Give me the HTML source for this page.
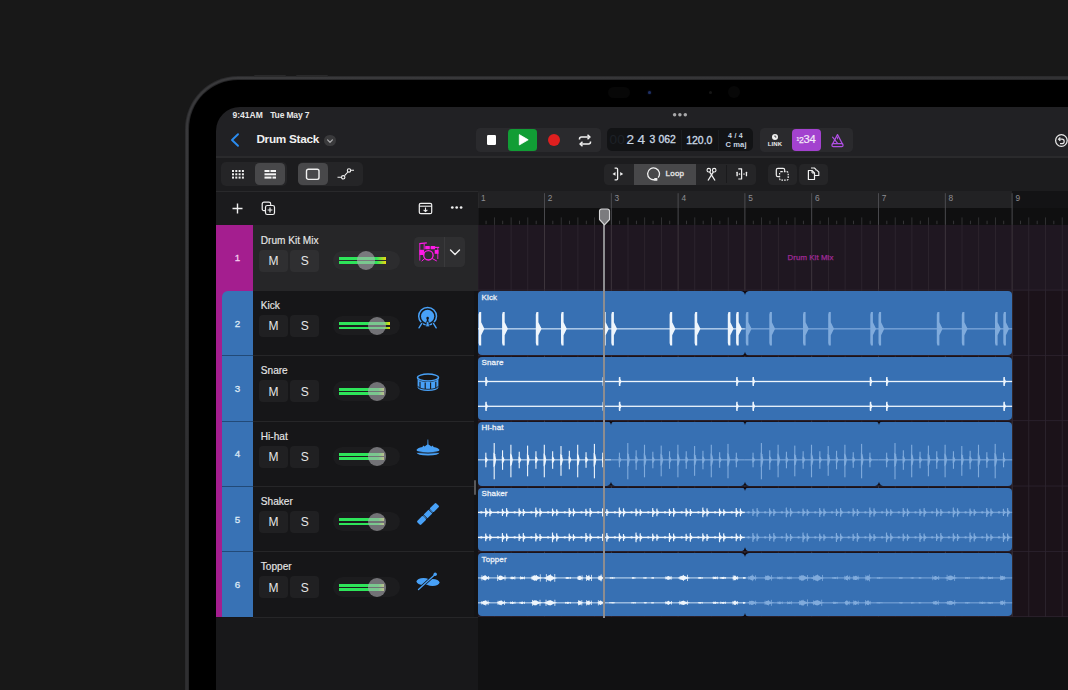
<!DOCTYPE html>
<html><head><meta charset="utf-8"><style>
html,body{margin:0;padding:0;width:1068px;height:690px;overflow:hidden;background:#181818;}
body{position:relative;font-family:"Liberation Sans", sans-serif;}
body>div{position:absolute;}
.t{position:absolute;line-height:1;white-space:nowrap;}
</style></head><body>
<div style="left:185.3px;top:75.8px;width:1100px;height:900px;border-radius:53px;background:#2b2b2d;"></div><div style="left:186.2px;top:76.6px;width:1100px;height:900px;border-radius:52px;background:linear-gradient(160deg,#3a3a3c,#2f2f31 30%);"></div><div style="left:188.3px;top:78.9px;width:1100px;height:900px;border-radius:50px;background:#272729;"></div><div style="left:189.2px;top:80.3px;width:1100px;height:900px;border-radius:49px;background:#000;"></div><div style="left:254px;top:74.5px;width:32px;height:2.5px;background:#29292a;border-radius:1px;"></div><div style="left:296px;top:74.5px;width:32px;height:2.5px;background:#29292a;border-radius:1px;"></div><div style="left:648.2px;top:91px;width:3px;height:3.2px;border-radius:2px;background:#1f3166;box-shadow:0 0 2px #1a2450"></div><div style="left:608px;top:87px;width:22px;height:11px;border-radius:6px;background:#070707;"></div><div style="left:709.2px;top:91.2px;width:2.6px;height:2.6px;border-radius:2px;background:#161616;"></div><div style="left:728px;top:86px;width:12px;height:12px;border-radius:6px;background:#070707;"></div><div style="left:215.5px;top:106.5px;width:1000px;height:700px;border-top-left-radius:24px;background:#212124;overflow:hidden" id="scr"></div><div style="left:215.5px;top:156px;width:900px;height:1.6px;background:#2a2a2c;border-radius:0px;"></div><div style="left:215.5px;top:157.6px;width:900px;height:33.4px;background:#1c1c1e;border-radius:0px;"></div><svg style="position:absolute;left:671px;top:111px;" width="18" height="7" viewBox="0 0 18 7"><circle cx="3.6" cy="3.7" r="1.75" fill="#a8a8aa"/><circle cx="8.9" cy="3.7" r="1.75" fill="#a8a8aa"/><circle cx="14.3" cy="3.7" r="1.75" fill="#a8a8aa"/></svg><div class="t" style="left:232.5px;top:111.00px;font-size:8.5px;color:#e8e8e8;font-weight:700;letter-spacing:0px">9:41AM</div><div class="t" style="left:270.2px;top:111.00px;font-size:8.5px;color:#e8e8e8;font-weight:700;letter-spacing:-0.15px">Tue May 7</div><svg style="position:absolute;left:229px;top:132px;" width="12" height="16" viewBox="0 0 12 16"><path d="M9 2.2 L3 8 L9 13.8" fill="none" stroke="#2b8cf0" stroke-width="1.9" stroke-linecap="round" stroke-linejoin="round"/></svg><div class="t" style="left:256.4px;top:134.11px;font-size:11.8px;color:#f0f0f0;font-weight:700;letter-spacing:-0.3px">Drum Stack</div><div style="left:324.2px;top:134.5px;width:11.6px;height:11.6px;border-radius:6px;background:#3a3a3c"></div><svg style="position:absolute;left:324.2px;top:134.5px;" width="12" height="12" viewBox="0 0 12 12"><path d="M3.6 4.9 L6 7.3 L8.4 4.9" fill="none" stroke="#b0b0b2" stroke-width="1.2" stroke-linecap="round" stroke-linejoin="round"/></svg><div style="left:475.5px;top:128px;width:125.5px;height:24px;background:#2a2a2d;border-radius:4.5px;"></div><div style="left:486.8px;top:135px;width:9.6px;height:10px;background:#ffffff;border-radius:1.2px;"></div><div style="left:507.7px;top:129.2px;width:29.8px;height:21.6px;background:#119d35;border-radius:3.5px;"></div><svg style="position:absolute;left:507.7px;top:129.2px;" width="30" height="22" viewBox="0 0 30 22"><path d="M11.3 5.6 L20.2 10.8 L11.3 16 Z" fill="#fff" stroke="#fff" stroke-width="0.8" stroke-linejoin="round"/></svg><div style="left:548px;top:134px;width:12px;height:12px;border-radius:6px;background:#df1f1f"></div><svg style="position:absolute;left:577px;top:134px;" width="16" height="13" viewBox="0 0 16 13"><path d="M2.5 5.5 V5 Q2.5 3 4.5 3 H12" fill="none" stroke="#f2f2f2" stroke-width="1.5"/><path d="M10.5 0.8 L13 3 L10.5 5.2" fill="none" stroke="#f2f2f2" stroke-width="1.5" stroke-linejoin="round"/><path d="M13.5 7.5 V8 Q13.5 10 11.5 10 H4" fill="none" stroke="#f2f2f2" stroke-width="1.5"/><path d="M5.5 7.8 L3 10 L5.5 12.2" fill="none" stroke="#f2f2f2" stroke-width="1.5" stroke-linejoin="round"/></svg><div style="left:606.7px;top:128.2px;width:146.1px;height:23.3px;background:#121315;border-radius:5px;"></div><div style="left:681px;top:130px;width:0.8px;height:20px;background:#1a1c1f;border-radius:0px;"></div><div style="left:717.8px;top:130px;width:0.8px;height:20px;background:#1a1c1f;border-radius:0px;"></div><div class="t" style="left:609.6px;top:133.29px;font-size:13.6px;color:#1d2127;font-weight:400;letter-spacing:0px">00</div><div class="t" style="left:626.6px;top:133.29px;font-size:13.6px;color:#c8d6e2;font-weight:400;-webkit-text-stroke:0.2px #c8d6e2">2</div><div class="t" style="left:637.6px;top:133.29px;font-size:13.6px;color:#c8d6e2;font-weight:400;-webkit-text-stroke:0.2px #c8d6e2">4</div><div class="t" style="left:649.5px;top:135.40px;font-size:10.4px;color:#c8d6e2;font-weight:400;-webkit-text-stroke:0.35px #c8d6e2">3</div><div class="t" style="left:658.6px;top:135.40px;font-size:10.4px;color:#c8d6e2;font-weight:400;letter-spacing:-0.1px;-webkit-text-stroke:0.35px #c8d6e2">062</div><div class="t" style="left:686.2px;top:135.01px;font-size:10.5px;color:#c8d6e2;font-weight:400;letter-spacing:0px;-webkit-text-stroke:0.35px #c8d6e2">120.0</div><div class="t" style="left:635.5px;width:200px;text-align:center;top:131.97px;font-size:7px;color:#c8d6e2;font-weight:700;letter-spacing:0.3px">4 / 4</div><div class="t" style="left:636px;width:200px;text-align:center;top:140.77px;font-size:7.6px;color:#c8d6e2;font-weight:700;letter-spacing:0.1px">C maj</div><div style="left:759.6px;top:128px;width:93.4px;height:24px;background:#2a2a2d;border-radius:4.5px;"></div><div style="left:772px;top:133.5px;width:6px;height:6px;border-radius:3px;background:#f0f0f0"></div><svg style="position:absolute;left:772px;top:133.5px;" width="6" height="6" viewBox="0 0 6 6"><path d="M3 1.4 V3 H4.4" fill="none" stroke="#2a2a2d" stroke-width="0.9"/></svg><div class="t" style="left:675px;width:200px;text-align:center;top:140.92px;font-size:6px;color:#eaeaea;font-weight:700;letter-spacing:0.1px">LINK</div><div style="left:791.8px;top:129px;width:29.2px;height:22px;background:#a342cf;border-radius:4px;"></div><div class="t" style="left:796.3px;top:137.16px;font-size:5.6px;color:#f4eaf8;font-weight:700;">1</div><div class="t" style="left:799.0px;top:136.02px;font-size:8.6px;color:#f4eaf8;font-weight:400;-webkit-text-stroke:0.25px #f4eaf8">2</div><div class="t" style="left:803.4px;top:134.32px;font-size:11.2px;color:#f4eaf8;font-weight:400;-webkit-text-stroke:0.2px #f4eaf8">3</div><div class="t" style="left:809.6px;top:134.32px;font-size:11.2px;color:#f4eaf8;font-weight:400;-webkit-text-stroke:0.2px #f4eaf8">4</div><svg style="position:absolute;left:830px;top:132.5px;" width="15" height="15" viewBox="0 0 15 15"><path d="M2.4 11.2 L7.5 1.6 L12.6 11.2" fill="none" stroke="#b04fe4" stroke-width="1.25" stroke-linejoin="round"/><rect x="2" y="10.6" width="11" height="3" rx="1.2" fill="none" stroke="#b04fe4" stroke-width="1.25"/><path d="M7.6 10.3 L2.6 4.2" stroke="#b04fe4" stroke-width="1.2" stroke-linecap="round"/><path d="M7.5 3.9 V6.3" stroke="#b04fe4" stroke-width="0.9"/></svg><svg style="position:absolute;left:1053.5px;top:132.5px;" width="15" height="15" viewBox="0 0 15 15"><circle cx="7.4" cy="7.5" r="5.8" fill="none" stroke="#e8e8e8" stroke-width="1.25"/><path d="M5 6.2 H8 A2.2 2.2 0 1 1 8 10.6 H6" fill="none" stroke="#e8e8e8" stroke-width="1.2"/><path d="M6.3 4.5 L4.6 6.2 L6.3 7.9" fill="none" stroke="#e8e8e8" stroke-width="1.2"/></svg><div style="left:221px;top:162px;width:65.5px;height:24px;background:#252527;border-radius:5px;"></div><div style="left:255px;top:163px;width:30px;height:22px;background:#48484a;border-radius:4.5px;"></div><svg style="position:absolute;left:230.5px;top:168.5px;" width="14" height="11" viewBox="0 0 14 11"><rect x="1.0" y="1.0" width="2" height="2" fill="#f0f0f0"/><rect x="1.0" y="4.3" width="2" height="2" fill="#f0f0f0"/><rect x="1.0" y="7.6" width="2" height="2" fill="#f0f0f0"/><rect x="4.3" y="1.0" width="2" height="2" fill="#f0f0f0"/><rect x="4.3" y="4.3" width="2" height="2" fill="#f0f0f0"/><rect x="4.3" y="7.6" width="2" height="2" fill="#f0f0f0"/><rect x="7.6" y="1.0" width="2" height="2" fill="#f0f0f0"/><rect x="7.6" y="4.3" width="2" height="2" fill="#f0f0f0"/><rect x="7.6" y="7.6" width="2" height="2" fill="#f0f0f0"/><rect x="10.899999999999999" y="1.0" width="2" height="2" fill="#f0f0f0"/><rect x="10.899999999999999" y="4.3" width="2" height="2" fill="#f0f0f0"/><rect x="10.899999999999999" y="7.6" width="2" height="2" fill="#f0f0f0"/></svg><svg style="position:absolute;left:263.5px;top:168.5px;" width="14" height="12" viewBox="0 0 14 12"><rect x="0.5" y="1" width="5" height="2" fill="#f4f4f4"/><rect x="6.5" y="1" width="5.5" height="2" fill="#f4f4f4"/><rect x="0.5" y="4.3" width="11.5" height="2" fill="#f4f4f4"/><rect x="0.5" y="7.6" width="7" height="2" fill="#f4f4f4"/><rect x="8.5" y="7.6" width="3.5" height="2" fill="#f4f4f4"/></svg><div style="left:298px;top:162px;width:64.5px;height:24px;background:#252527;border-radius:5px;"></div><div style="left:298px;top:163px;width:30px;height:22px;background:#48484a;border-radius:4.5px;"></div><svg style="position:absolute;left:305px;top:168px;" width="16" height="13" viewBox="0 0 16 13"><rect x="1.5" y="1.2" width="12.5" height="10.2" rx="1.8" fill="none" stroke="#f0f0f0" stroke-width="1.4"/></svg><svg style="position:absolute;left:337px;top:166px;" width="18" height="15" viewBox="0 0 18 15"><path d="M0.5 11.3 H4.3 M7.6 9.7 L10.9 6 M13.7 4.3 H17" fill="none" stroke="#f0f0f0" stroke-width="1.1"/><circle cx="6.2" cy="11.3" r="1.7" fill="none" stroke="#f0f0f0" stroke-width="1.1"/><circle cx="12" cy="4.4" r="1.7" fill="none" stroke="#f0f0f0" stroke-width="1.1"/></svg><div style="left:603.5px;top:163.5px;width:152.8px;height:21.2px;background:#252527;border-radius:4.5px;"></div><div style="left:633.7px;top:163.5px;width:62px;height:21.2px;background:#48484a;border-radius:0px;"></div><div style="left:726.2px;top:165px;width:0.8px;height:18px;background:#1a1a1c;border-radius:0px;"></div><svg style="position:absolute;left:611px;top:166px;" width="14" height="16" viewBox="0 0 14 16"><path d="M3.6 2.2 H5.6 Q6.6 2.2 6.6 3.2 V12.8 Q6.6 13.8 5.6 13.8 H3.6" fill="none" stroke="#f0f0f0" stroke-width="1.3"/><path d="M1.5 7.9 L4.5 6 V9.8 Z" fill="#f0f0f0"/><path d="M9.2 6 L12.2 7.9 L9.2 9.8 Z" fill="#f0f0f0"/></svg><svg style="position:absolute;left:645.5px;top:166.5px;" width="15" height="15" viewBox="0 0 15 15"><path d="M8.8 12.6 A5.9 5.9 0 1 1 12.1 10.6" fill="none" stroke="#f0f0f0" stroke-width="1.3"/><rect x="8.2" y="11" width="3.2" height="2.8" rx="0.6" fill="#f0f0f0"/></svg><div class="t" style="left:665.6px;top:170.33px;font-size:8px;color:#e2e2e2;font-weight:400;letter-spacing:0.2px;-webkit-text-stroke:0.35px #e2e2e2">Loop</div><svg style="position:absolute;left:705px;top:166.5px;" width="13" height="15" viewBox="0 0 13 15"><circle cx="3.8" cy="3.2" r="1.8" fill="none" stroke="#f0f0f0" stroke-width="1.1"/><circle cx="9.2" cy="3.2" r="1.8" fill="none" stroke="#f0f0f0" stroke-width="1.1"/><path d="M4.6 4.8 L10 13.5 M8.4 4.8 L3 13.5" stroke="#f0f0f0" stroke-width="1.3"/></svg><svg style="position:absolute;left:734px;top:166px;" width="15" height="15" viewBox="0 0 15 15"><rect x="2.4" y="5.8" width="1.4" height="4.4" rx="0.5" fill="#f0f0f0"/><circle cx="5.5" cy="8" r="0.85" fill="#f0f0f0"/><path d="M4.3 2.8 H7.6 V13 H4.3" fill="none" stroke="#f0f0f0" stroke-width="1.2" stroke-linejoin="round"/><rect x="9" y="7.6" width="2" height="0.9" fill="#d8d8d8"/><rect x="11.8" y="5.8" width="1.3" height="4.4" rx="0.5" fill="#f0f0f0"/></svg><div style="left:767.6px;top:163.5px;width:29px;height:21.2px;background:#252527;border-radius:4.5px;"></div><div style="left:799px;top:163.5px;width:28.6px;height:21.2px;background:#252527;border-radius:4.5px;"></div><svg style="position:absolute;left:774.5px;top:167px;" width="16" height="15" viewBox="0 0 16 15"><rect x="1.3" y="1.3" width="8.4" height="8.4" rx="1.6" fill="none" stroke="#f0f0f0" stroke-width="1.2"/><rect x="4.6" y="4.6" width="8.6" height="8.6" rx="1.6" fill="#252527" stroke="#f0f0f0" stroke-width="1.2" stroke-dasharray="1.6 1.1"/></svg><svg style="position:absolute;left:806px;top:166px;" width="16" height="16" viewBox="0 0 16 16"><path d="M5 2 H8.5 L10 3.5 V4.5" fill="none" stroke="#f0f0f0" stroke-width="1.1"/><path d="M2.4 4.5 H6 L8.5 7 V13.5 H2.4 Z" fill="none" stroke="#f0f0f0" stroke-width="1.2" stroke-linejoin="round"/><path d="M6 4.5 V7 H8.5" fill="none" stroke="#f0f0f0" stroke-width="1"/><path d="M8.5 9.5 H12.8 V6 L10.5 3.8" fill="none" stroke="#f0f0f0" stroke-width="1.1"/></svg><div style="left:215.5px;top:191.3px;width:262.5px;height:34px;background:#1b1b1d;border-radius:0px;"></div><div style="left:215.5px;top:225px;width:262.5px;height:500px;background:#161618;border-radius:0px;"></div><div style="left:215.5px;top:190.6px;width:900px;height:0.9px;background:#29292b;border-radius:0px;"></div><svg style="position:absolute;left:230.5px;top:201.5px;" width="13" height="13" viewBox="0 0 13 13"><path d="M6.5 1.5 V11.5 M1.5 6.5 H11.5" stroke="#f0f0f0" stroke-width="1.4"/></svg><svg style="position:absolute;left:260.5px;top:200.5px;" width="15" height="15" viewBox="0 0 15 15"><rect x="1.2" y="1.2" width="8.5" height="8.5" rx="1.8" fill="none" stroke="#f0f0f0" stroke-width="1.2"/><rect x="4.5" y="4.5" width="9" height="9" rx="1.8" fill="#1b1b1d" stroke="#f0f0f0" stroke-width="1.2"/><path d="M9 6.6 V11.4 M6.6 9 H11.4" stroke="#f0f0f0" stroke-width="1.2"/></svg><svg style="position:absolute;left:418px;top:201.5px;" width="15" height="13" viewBox="0 0 15 13"><rect x="1.3" y="1.3" width="12.4" height="10.4" rx="1.5" fill="none" stroke="#f0f0f0" stroke-width="1.2"/><path d="M1.3 4.2 H13.7" stroke="#f0f0f0" stroke-width="1.1"/><path d="M7.5 5.5 V9.5 M5.6 7.8 L7.5 9.6 L9.4 7.8" fill="none" stroke="#f0f0f0" stroke-width="1.1"/></svg><svg style="position:absolute;left:449px;top:205px;" width="16" height="5" viewBox="0 0 16 5"><circle cx="3.3" cy="2.5" r="1.35" fill="#f0f0f0"/><circle cx="7.7" cy="2.5" r="1.35" fill="#f0f0f0"/><circle cx="12.1" cy="2.5" r="1.35" fill="#f0f0f0"/></svg><div style="left:253px;top:225.2px;width:225px;height:65.32999999999998px;background:#262628;border-radius:0px;"></div><div style="left:215.5px;top:225.2px;width:37.5px;height:391.9800000000001px;background:#a41e8f;border-radius:0px;"></div><div style="left:221.7px;top:290.53px;width:31.30000000000001px;height:326.6500000000001px;background:#3872b5;border-top-left-radius:6px"></div><div style="left:221.7px;top:355.36px;width:31.30000000000001px;height:1px;background:#224a78;border-radius:0px;"></div><div style="left:221.7px;top:420.69px;width:31.30000000000001px;height:1px;background:#224a78;border-radius:0px;"></div><div style="left:221.7px;top:486.02px;width:31.30000000000001px;height:1px;background:#224a78;border-radius:0px;"></div><div style="left:221.7px;top:551.3499999999999px;width:31.30000000000001px;height:1px;background:#224a78;border-radius:0px;"></div><div style="left:253px;top:290.03px;width:225px;height:1px;background:#262628;border-radius:0px;"></div><div style="left:253px;top:355.36px;width:225px;height:1px;background:#262628;border-radius:0px;"></div><div style="left:253px;top:420.69px;width:225px;height:1px;background:#262628;border-radius:0px;"></div><div style="left:253px;top:486.02px;width:225px;height:1px;background:#262628;border-radius:0px;"></div><div style="left:253px;top:551.3499999999999px;width:225px;height:1px;background:#262628;border-radius:0px;"></div><div style="left:253px;top:616.6800000000001px;width:225px;height:1px;background:#262628;border-radius:0px;"></div><div class="t" style="left:137.4px;width:200px;text-align:center;top:253.20px;font-size:9.8px;color:#f4d0ee;font-weight:400;-webkit-text-stroke:0.3px #f4d0ee">1</div><div class="t" style="left:260.8px;top:235.55px;font-size:10.1px;color:#e6e6e6;font-weight:400;letter-spacing:0px;-webkit-text-stroke:0.15px #e6e6e6">Drum Kit Mix</div><div style="left:259px;top:249.79999999999998px;width:29px;height:21.8px;background:#2f2f31;border-radius:4px;"></div><div style="left:290.3px;top:249.79999999999998px;width:29px;height:21.8px;background:#2f2f31;border-radius:4px;"></div><div class="t" style="left:173.5px;width:200px;text-align:center;top:255.04px;font-size:12px;color:#e6e6e6;font-weight:400;">M</div><div class="t" style="left:204.8px;width:200px;text-align:center;top:255.04px;font-size:12px;color:#e6e6e6;font-weight:400;">S</div><div style="left:332.8px;top:250.79999999999998px;width:67.4px;height:19.2px;background:#2c2c2e;border-radius:10px;"></div><div style="left:338.8px;top:257.10px;width:47.70px;height:2.75px;background:linear-gradient(90deg,#2ee55a 0,#2ee55a 37.7px,#ffd60a 47.7px)"></div><div style="left:338.8px;top:261.30px;width:47.70px;height:2.75px;background:linear-gradient(90deg,#2ee55a 0,#2ee55a 37.7px,#ffd60a 47.7px)"></div><div style="left:356.6px;top:251.20px;width:18.8px;height:18.8px;border-radius:9.4px;background:rgba(178,178,182,0.58)"></div><div class="t" style="left:137.4px;width:200px;text-align:center;top:318.53px;font-size:9.8px;color:#dde9f5;font-weight:400;-webkit-text-stroke:0.3px #dde9f5">2</div><div class="t" style="left:260.8px;top:300.88px;font-size:10.1px;color:#e6e6e6;font-weight:400;letter-spacing:0px;-webkit-text-stroke:0.15px #e6e6e6">Kick</div><div style="left:259px;top:315.13px;width:29px;height:21.8px;background:#202022;border-radius:4px;"></div><div style="left:290.3px;top:315.13px;width:29px;height:21.8px;background:#202022;border-radius:4px;"></div><div class="t" style="left:173.5px;width:200px;text-align:center;top:320.37px;font-size:12px;color:#e6e6e6;font-weight:400;">M</div><div class="t" style="left:204.8px;width:200px;text-align:center;top:320.37px;font-size:12px;color:#e6e6e6;font-weight:400;">S</div><div style="left:332.8px;top:316.13px;width:67.4px;height:19.2px;background:#1c1c1e;border-radius:10px;"></div><div style="left:338.8px;top:322.43px;width:51.70px;height:2.75px;background:linear-gradient(90deg,#2ee55a 0,#2ee55a 43.7px,#ffd60a 51.7px)"></div><div style="left:338.8px;top:326.63px;width:51.70px;height:2.75px;background:linear-gradient(90deg,#2ee55a 0,#2ee55a 43.7px,#ffd60a 51.7px)"></div><div style="left:367.6px;top:316.53px;width:18.8px;height:18.8px;border-radius:9.4px;background:rgba(178,178,182,0.58)"></div><div class="t" style="left:137.4px;width:200px;text-align:center;top:383.86px;font-size:9.8px;color:#dde9f5;font-weight:400;-webkit-text-stroke:0.3px #dde9f5">3</div><div class="t" style="left:260.8px;top:366.21px;font-size:10.1px;color:#e6e6e6;font-weight:400;letter-spacing:0px;-webkit-text-stroke:0.15px #e6e6e6">Snare</div><div style="left:259px;top:380.46000000000004px;width:29px;height:21.8px;background:#202022;border-radius:4px;"></div><div style="left:290.3px;top:380.46000000000004px;width:29px;height:21.8px;background:#202022;border-radius:4px;"></div><div class="t" style="left:173.5px;width:200px;text-align:center;top:385.70px;font-size:12px;color:#e6e6e6;font-weight:400;">M</div><div class="t" style="left:204.8px;width:200px;text-align:center;top:385.70px;font-size:12px;color:#e6e6e6;font-weight:400;">S</div><div style="left:332.8px;top:381.46000000000004px;width:67.4px;height:19.2px;background:#1c1c1e;border-radius:10px;"></div><div style="left:338.8px;top:387.76px;width:44.90px;height:2.75px;background:linear-gradient(90deg,#2ee55a 0,#2ee55a 39.2px,#c9d65a 44.9px)"></div><div style="left:338.8px;top:391.96px;width:44.90px;height:2.75px;background:linear-gradient(90deg,#2ee55a 0,#2ee55a 39.2px,#c9d65a 44.9px)"></div><div style="left:367.6px;top:381.86px;width:18.8px;height:18.8px;border-radius:9.4px;background:rgba(178,178,182,0.58)"></div><div class="t" style="left:137.4px;width:200px;text-align:center;top:449.19px;font-size:9.8px;color:#dde9f5;font-weight:400;-webkit-text-stroke:0.3px #dde9f5">4</div><div class="t" style="left:260.8px;top:431.54px;font-size:10.1px;color:#e6e6e6;font-weight:400;letter-spacing:0px;-webkit-text-stroke:0.15px #e6e6e6">Hi-hat</div><div style="left:259px;top:445.79px;width:29px;height:21.8px;background:#202022;border-radius:4px;"></div><div style="left:290.3px;top:445.79px;width:29px;height:21.8px;background:#202022;border-radius:4px;"></div><div class="t" style="left:173.5px;width:200px;text-align:center;top:451.03px;font-size:12px;color:#e6e6e6;font-weight:400;">M</div><div class="t" style="left:204.8px;width:200px;text-align:center;top:451.03px;font-size:12px;color:#e6e6e6;font-weight:400;">S</div><div style="left:332.8px;top:446.79px;width:67.4px;height:19.2px;background:#1c1c1e;border-radius:10px;"></div><div style="left:338.8px;top:453.09px;width:44.90px;height:2.75px;background:linear-gradient(90deg,#2ee55a 0,#2ee55a 39.2px,#c9d65a 44.9px)"></div><div style="left:338.8px;top:457.29px;width:44.90px;height:2.75px;background:linear-gradient(90deg,#2ee55a 0,#2ee55a 39.2px,#c9d65a 44.9px)"></div><div style="left:367.6px;top:447.19px;width:18.8px;height:18.8px;border-radius:9.4px;background:rgba(178,178,182,0.58)"></div><div class="t" style="left:137.4px;width:200px;text-align:center;top:514.52px;font-size:9.8px;color:#dde9f5;font-weight:400;-webkit-text-stroke:0.3px #dde9f5">5</div><div class="t" style="left:260.8px;top:496.87px;font-size:10.1px;color:#e6e6e6;font-weight:400;letter-spacing:0px;-webkit-text-stroke:0.15px #e6e6e6">Shaker</div><div style="left:259px;top:511.12px;width:29px;height:21.8px;background:#202022;border-radius:4px;"></div><div style="left:290.3px;top:511.12px;width:29px;height:21.8px;background:#202022;border-radius:4px;"></div><div class="t" style="left:173.5px;width:200px;text-align:center;top:516.36px;font-size:12px;color:#e6e6e6;font-weight:400;">M</div><div class="t" style="left:204.8px;width:200px;text-align:center;top:516.36px;font-size:12px;color:#e6e6e6;font-weight:400;">S</div><div style="left:332.8px;top:512.12px;width:67.4px;height:19.2px;background:#1c1c1e;border-radius:10px;"></div><div style="left:338.8px;top:518.42px;width:44.90px;height:2.75px;background:linear-gradient(90deg,#2ee55a 0,#2ee55a 39.2px,#c9d65a 44.9px)"></div><div style="left:338.8px;top:522.62px;width:44.90px;height:2.75px;background:linear-gradient(90deg,#2ee55a 0,#2ee55a 39.2px,#c9d65a 44.9px)"></div><div style="left:367.6px;top:512.52px;width:18.8px;height:18.8px;border-radius:9.4px;background:rgba(178,178,182,0.58)"></div><div class="t" style="left:137.4px;width:200px;text-align:center;top:579.85px;font-size:9.8px;color:#dde9f5;font-weight:400;-webkit-text-stroke:0.3px #dde9f5">6</div><div class="t" style="left:260.8px;top:562.20px;font-size:10.1px;color:#e6e6e6;font-weight:400;letter-spacing:0px;-webkit-text-stroke:0.15px #e6e6e6">Topper</div><div style="left:259px;top:576.4499999999999px;width:29px;height:21.8px;background:#202022;border-radius:4px;"></div><div style="left:290.3px;top:576.4499999999999px;width:29px;height:21.8px;background:#202022;border-radius:4px;"></div><div class="t" style="left:173.5px;width:200px;text-align:center;top:581.69px;font-size:12px;color:#e6e6e6;font-weight:400;">M</div><div class="t" style="left:204.8px;width:200px;text-align:center;top:581.69px;font-size:12px;color:#e6e6e6;font-weight:400;">S</div><div style="left:332.8px;top:577.4499999999999px;width:67.4px;height:19.2px;background:#1c1c1e;border-radius:10px;"></div><div style="left:338.8px;top:583.75px;width:44.90px;height:2.75px;background:linear-gradient(90deg,#2ee55a 0,#2ee55a 39.2px,#c9d65a 44.9px)"></div><div style="left:338.8px;top:587.95px;width:44.90px;height:2.75px;background:linear-gradient(90deg,#2ee55a 0,#2ee55a 39.2px,#c9d65a 44.9px)"></div><div style="left:367.6px;top:577.85px;width:18.8px;height:18.8px;border-radius:9.4px;background:rgba(178,178,182,0.58)"></div><div style="left:414.2px;top:237.2px;width:51.1px;height:29.8px;background:#2f2f31;border-radius:4.5px;"></div><div style="left:443.6px;top:237.2px;width:0.9px;height:29.8px;background:#3a3a3c;border-radius:0px;"></div><svg style="position:absolute;left:448px;top:247px;" width="14" height="11" viewBox="0 0 14 11"><path d="M2.5 3 L7 7.5 L11.5 3" fill="none" stroke="#f0f0f0" stroke-width="1.4" stroke-linecap="round" stroke-linejoin="round"/></svg><svg style="position:absolute;left:419px;top:242px;" width="21" height="20" viewBox="0 0 21 20"><path d="M0.3 1.6 L7.8 0.9" stroke="#ff1ae6" stroke-width="1.4"/><path d="M5.2 1.5 V7.5" stroke="#ff1ae6" stroke-width="0.9"/>
<rect x="6.2" y="3.9" width="4.6" height="3.3" rx="0.5" fill="#ff1ae6"/><rect x="11.6" y="3.9" width="4.5" height="3.3" rx="0.5" fill="#ff1ae6"/>
<path d="M15.6 5.4 H20.2" stroke="#ff1ae6" stroke-width="1.2"/><path d="M0.8 1.8 V18.6" stroke="#ff1ae6" stroke-width="0.9"/>
<rect x="0.5" y="7.8" width="4.6" height="5.2" fill="#ff1ae6"/><rect x="15.7" y="7.9" width="3.8" height="3.9" fill="#ff1ae6"/><path d="M18.8 6 V17" stroke="#ff1ae6" stroke-width="0.9"/>
<circle cx="9.4" cy="13.3" r="4.7" fill="none" stroke="#ff1ae6" stroke-width="1.35"/>
<path d="M5.8 16.5 L2.6 19.2 M13.2 16.5 L17.8 19" stroke="#ff1ae6" stroke-width="1"/></svg><svg style="position:absolute;left:416px;top:306.2px;" width="24" height="26" viewBox="0 0 24 26"><circle cx="11.6" cy="10.3" r="8.9" fill="none" stroke="#48a1f7" stroke-width="1.5"/><circle cx="11.6" cy="10.3" r="6.6" fill="#48a1f7"/>
<path d="M5.8 17.4 L3 21.8 M17.4 17.4 L20.2 21.8" stroke="#161618" stroke-width="3" stroke-linecap="round"/>
<path d="M5.8 17.4 L3 21.8 M17.4 17.4 L20.2 21.8" stroke="#48a1f7" stroke-width="1.4" stroke-linecap="round"/>
<circle cx="11.6" cy="11.9" r="1.25" fill="#161618"/><path d="M11.6 12 V15.5" stroke="#161618" stroke-width="1.6"/>
<path d="M10.6 15.5 H12.6 L13.6 20.8 H9.6 Z" fill="#48a1f7" stroke="#161618" stroke-width="0.7" stroke-linejoin="round"/></svg><svg style="position:absolute;left:415px;top:371.5px;" width="26" height="22" viewBox="0 0 26 22"><ellipse cx="13" cy="5.5" rx="10.5" ry="3.4" fill="none" stroke="#48a1f7" stroke-width="1.5"/>
<path d="M2.6 6.5 V15.5 A10.4 3.4 0 0 0 23.4 15.5 V6.5 A10.4 3.4 0 0 1 2.6 6.5 Z" fill="#48a1f7"/>
<path d="M5 9.8 V16.2 M10.2 10.5 V17 M15.6 10.5 V17 M20.8 9.8 V16.2" stroke="#161618" stroke-width="1.1"/>
<path d="M2.6 15.5 A10.4 3.4 0 0 0 23.4 15.5" fill="none" stroke="#161618" stroke-width="0.8" transform="translate(0,-1.6)"/></svg><svg style="position:absolute;left:415px;top:437.5px;" width="26" height="20" viewBox="0 0 26 20"><g transform="translate(13 0) scale(1.1 1) translate(-13 0)"><path d="M12.6 1.5 L13.2 1.5 L13.4 6.5 Q15 7.5 16 8.5 L17.5 7.5 L18 8.9 Q23 10 23.5 12 Q23.5 14 13 14.3 Q2.5 14 2.5 12 Q3 10 8 8.9 L8.5 7.5 L10 8.5 Q11 7.5 12.4 6.5 Z" fill="#48a1f7"/>
<path d="M2.6 14.2 Q3 17.4 13 17.6 Q23 17.4 23.4 14.2" fill="#48a1f7"/><path d="M2.4 14.4 Q13 16 23.6 14.4" fill="none" stroke="#161618" stroke-width="0.8"/></g></svg><svg style="position:absolute;left:411.1px;top:497.3px;" width="34" height="34" viewBox="0 0 34 34"><g transform="rotate(-45 17 17)"><rect x="3.6" y="14.3" width="8.6" height="5.4" rx="1.2" fill="#48a1f7"/><rect x="13.6" y="14.3" width="6.8" height="5.4" rx="0.4" fill="#48a1f7"/><rect x="21.8" y="14.3" width="8.6" height="5.4" rx="1.2" fill="#48a1f7"/>
<rect x="12.6" y="14.6" width="0.6" height="4.8" fill="#48a1f7"/><rect x="20.8" y="14.6" width="0.6" height="4.8" fill="#48a1f7"/></g></svg><svg style="position:absolute;left:415px;top:569.5px;" width="26" height="23" viewBox="0 0 26 23"><ellipse cx="8.5" cy="11.5" rx="7" ry="3.5" fill="#48a1f7"/><ellipse cx="17.5" cy="12.5" rx="7" ry="3.5" fill="#48a1f7"/>
<path d="M3.5 19.5 L19.5 5" stroke="#161618" stroke-width="3"/><path d="M3.5 19.5 L19.5 5" stroke="#48a1f7" stroke-width="1.3" stroke-linecap="round"/><circle cx="20.2" cy="4.3" r="1.7" fill="#48a1f7"/></svg><div style="left:478px;top:191.3px;width:600px;height:16.5px;background:#131315;border-radius:0px;"></div><div style="left:478px;top:191.3px;width:534.0999999999999px;height:16.5px;background:#222224;border-radius:0px;"></div><div style="left:478px;top:207.8px;width:600px;height:17.4px;background:#0f0f10;border-radius:0px;"></div><div style="left:478px;top:225.2px;width:600px;height:65.32999999999998px;background:#1f1721;border-radius:0px;"></div><div style="left:478px;top:290.53px;width:600px;height:326.6500000000001px;background:#1b1219;border-radius:0px;"></div><div style="left:478px;top:617.1800000000001px;width:600px;height:200px;background:#111112;border-radius:0px;"></div><div style="left:215.5px;top:617.6800000000001px;width:262.5px;height:200px;background:#18181a;border-radius:0px;"></div><svg style="position:absolute;left:478px;top:191.3px;" width="590" height="500" viewBox="0 0 590 500"><rect x="-0.75" y="2.1999999999999886" width="0.9" height="31.69999999999999" fill="#505054"/><rect x="-0.75" y="33.89999999999998" width="0.9" height="391.9800000000001" fill="#40383f"/><rect x="16.00" y="26.399999999999977" width="0.8" height="7.5" fill="#38383a"/><rect x="16.00" y="33.89999999999998" width="0.8" height="391.9800000000001" fill="#2f2730"/><rect x="32.70" y="26.399999999999977" width="0.8" height="7.5" fill="#38383a"/><rect x="32.70" y="33.89999999999998" width="0.8" height="391.9800000000001" fill="#2f2730"/><rect x="49.40" y="26.399999999999977" width="0.8" height="7.5" fill="#38383a"/><rect x="49.40" y="33.89999999999998" width="0.8" height="391.9800000000001" fill="#2f2730"/><rect x="66.05" y="2.1999999999999886" width="0.9" height="31.69999999999999" fill="#505054"/><rect x="66.05" y="33.89999999999998" width="0.9" height="391.9800000000001" fill="#40383f"/><rect x="82.80" y="26.399999999999977" width="0.8" height="7.5" fill="#38383a"/><rect x="82.80" y="33.89999999999998" width="0.8" height="391.9800000000001" fill="#2f2730"/><rect x="99.50" y="26.399999999999977" width="0.8" height="7.5" fill="#38383a"/><rect x="99.50" y="33.89999999999998" width="0.8" height="391.9800000000001" fill="#2f2730"/><rect x="116.20" y="26.399999999999977" width="0.8" height="7.5" fill="#38383a"/><rect x="116.20" y="33.89999999999998" width="0.8" height="391.9800000000001" fill="#2f2730"/><rect x="132.85" y="2.1999999999999886" width="0.9" height="31.69999999999999" fill="#505054"/><rect x="132.85" y="33.89999999999998" width="0.9" height="391.9800000000001" fill="#40383f"/><rect x="149.60" y="26.399999999999977" width="0.8" height="7.5" fill="#38383a"/><rect x="149.60" y="33.89999999999998" width="0.8" height="391.9800000000001" fill="#2f2730"/><rect x="166.30" y="26.399999999999977" width="0.8" height="7.5" fill="#38383a"/><rect x="166.30" y="33.89999999999998" width="0.8" height="391.9800000000001" fill="#2f2730"/><rect x="183.00" y="26.399999999999977" width="0.8" height="7.5" fill="#38383a"/><rect x="183.00" y="33.89999999999998" width="0.8" height="391.9800000000001" fill="#2f2730"/><rect x="199.65" y="2.1999999999999886" width="0.9" height="31.69999999999999" fill="#505054"/><rect x="199.65" y="33.89999999999998" width="0.9" height="391.9800000000001" fill="#40383f"/><rect x="216.40" y="26.399999999999977" width="0.8" height="7.5" fill="#38383a"/><rect x="216.40" y="33.89999999999998" width="0.8" height="391.9800000000001" fill="#2f2730"/><rect x="233.10" y="26.399999999999977" width="0.8" height="7.5" fill="#38383a"/><rect x="233.10" y="33.89999999999998" width="0.8" height="391.9800000000001" fill="#2f2730"/><rect x="249.80" y="26.399999999999977" width="0.8" height="7.5" fill="#38383a"/><rect x="249.80" y="33.89999999999998" width="0.8" height="391.9800000000001" fill="#2f2730"/><rect x="266.45" y="2.1999999999999886" width="0.9" height="31.69999999999999" fill="#505054"/><rect x="266.45" y="33.89999999999998" width="0.9" height="391.9800000000001" fill="#40383f"/><rect x="283.20" y="26.399999999999977" width="0.8" height="7.5" fill="#38383a"/><rect x="283.20" y="33.89999999999998" width="0.8" height="391.9800000000001" fill="#2f2730"/><rect x="299.90" y="26.399999999999977" width="0.8" height="7.5" fill="#38383a"/><rect x="299.90" y="33.89999999999998" width="0.8" height="391.9800000000001" fill="#2f2730"/><rect x="316.60" y="26.399999999999977" width="0.8" height="7.5" fill="#38383a"/><rect x="316.60" y="33.89999999999998" width="0.8" height="391.9800000000001" fill="#2f2730"/><rect x="333.25" y="2.1999999999999886" width="0.9" height="31.69999999999999" fill="#505054"/><rect x="333.25" y="33.89999999999998" width="0.9" height="391.9800000000001" fill="#40383f"/><rect x="350.00" y="26.399999999999977" width="0.8" height="7.5" fill="#38383a"/><rect x="350.00" y="33.89999999999998" width="0.8" height="391.9800000000001" fill="#2f2730"/><rect x="366.70" y="26.399999999999977" width="0.8" height="7.5" fill="#38383a"/><rect x="366.70" y="33.89999999999998" width="0.8" height="391.9800000000001" fill="#2f2730"/><rect x="383.40" y="26.399999999999977" width="0.8" height="7.5" fill="#38383a"/><rect x="383.40" y="33.89999999999998" width="0.8" height="391.9800000000001" fill="#2f2730"/><rect x="400.05" y="2.1999999999999886" width="0.9" height="31.69999999999999" fill="#505054"/><rect x="400.05" y="33.89999999999998" width="0.9" height="391.9800000000001" fill="#40383f"/><rect x="416.80" y="26.399999999999977" width="0.8" height="7.5" fill="#38383a"/><rect x="416.80" y="33.89999999999998" width="0.8" height="391.9800000000001" fill="#2f2730"/><rect x="433.50" y="26.399999999999977" width="0.8" height="7.5" fill="#38383a"/><rect x="433.50" y="33.89999999999998" width="0.8" height="391.9800000000001" fill="#2f2730"/><rect x="450.20" y="26.399999999999977" width="0.8" height="7.5" fill="#38383a"/><rect x="450.20" y="33.89999999999998" width="0.8" height="391.9800000000001" fill="#2f2730"/><rect x="466.85" y="2.1999999999999886" width="0.9" height="31.69999999999999" fill="#505054"/><rect x="466.85" y="33.89999999999998" width="0.9" height="391.9800000000001" fill="#40383f"/><rect x="483.60" y="26.399999999999977" width="0.8" height="7.5" fill="#38383a"/><rect x="483.60" y="33.89999999999998" width="0.8" height="391.9800000000001" fill="#2f2730"/><rect x="500.30" y="26.399999999999977" width="0.8" height="7.5" fill="#38383a"/><rect x="500.30" y="33.89999999999998" width="0.8" height="391.9800000000001" fill="#2f2730"/><rect x="517.00" y="26.399999999999977" width="0.8" height="7.5" fill="#38383a"/><rect x="517.00" y="33.89999999999998" width="0.8" height="391.9800000000001" fill="#2f2730"/><rect x="533.65" y="2.1999999999999886" width="0.9" height="31.69999999999999" fill="#505054"/><rect x="533.65" y="33.89999999999998" width="0.9" height="391.9800000000001" fill="#40383f"/><rect x="550.40" y="26.399999999999977" width="0.8" height="7.5" fill="#38383a"/><rect x="550.40" y="33.89999999999998" width="0.8" height="391.9800000000001" fill="#2f2730"/><rect x="567.10" y="26.399999999999977" width="0.8" height="7.5" fill="#38383a"/><rect x="567.10" y="33.89999999999998" width="0.8" height="391.9800000000001" fill="#2f2730"/><rect x="583.80" y="26.399999999999977" width="0.8" height="7.5" fill="#38383a"/><rect x="583.80" y="33.89999999999998" width="0.8" height="391.9800000000001" fill="#2f2730"/><rect x="7.65" y="29.69999999999999" width="0.8" height="3.5" fill="#3e3e40"/><rect x="24.35" y="29.69999999999999" width="0.8" height="3.5" fill="#3e3e40"/><rect x="41.05" y="29.69999999999999" width="0.8" height="3.5" fill="#3e3e40"/><rect x="57.75" y="29.69999999999999" width="0.8" height="3.5" fill="#3e3e40"/><rect x="74.45" y="29.69999999999999" width="0.8" height="3.5" fill="#3e3e40"/><rect x="91.15" y="29.69999999999999" width="0.8" height="3.5" fill="#3e3e40"/><rect x="107.85" y="29.69999999999999" width="0.8" height="3.5" fill="#3e3e40"/><rect x="124.55" y="29.69999999999999" width="0.8" height="3.5" fill="#3e3e40"/><rect x="141.25" y="29.69999999999999" width="0.8" height="3.5" fill="#3e3e40"/><rect x="157.95" y="29.69999999999999" width="0.8" height="3.5" fill="#3e3e40"/><rect x="174.65" y="29.69999999999999" width="0.8" height="3.5" fill="#3e3e40"/><rect x="191.35" y="29.69999999999999" width="0.8" height="3.5" fill="#3e3e40"/><rect x="208.05" y="29.69999999999999" width="0.8" height="3.5" fill="#3e3e40"/><rect x="224.75" y="29.69999999999999" width="0.8" height="3.5" fill="#3e3e40"/><rect x="241.45" y="29.69999999999999" width="0.8" height="3.5" fill="#3e3e40"/><rect x="258.15" y="29.69999999999999" width="0.8" height="3.5" fill="#3e3e40"/><rect x="274.85" y="29.69999999999999" width="0.8" height="3.5" fill="#3e3e40"/><rect x="291.55" y="29.69999999999999" width="0.8" height="3.5" fill="#3e3e40"/><rect x="308.25" y="29.69999999999999" width="0.8" height="3.5" fill="#3e3e40"/><rect x="324.95" y="29.69999999999999" width="0.8" height="3.5" fill="#3e3e40"/><rect x="341.65" y="29.69999999999999" width="0.8" height="3.5" fill="#3e3e40"/><rect x="358.35" y="29.69999999999999" width="0.8" height="3.5" fill="#3e3e40"/><rect x="375.05" y="29.69999999999999" width="0.8" height="3.5" fill="#3e3e40"/><rect x="391.75" y="29.69999999999999" width="0.8" height="3.5" fill="#3e3e40"/><rect x="408.45" y="29.69999999999999" width="0.8" height="3.5" fill="#3e3e40"/><rect x="425.15" y="29.69999999999999" width="0.8" height="3.5" fill="#3e3e40"/><rect x="441.85" y="29.69999999999999" width="0.8" height="3.5" fill="#3e3e40"/><rect x="458.55" y="29.69999999999999" width="0.8" height="3.5" fill="#3e3e40"/><rect x="475.25" y="29.69999999999999" width="0.8" height="3.5" fill="#3e3e40"/><rect x="491.95" y="29.69999999999999" width="0.8" height="3.5" fill="#3e3e40"/><rect x="508.65" y="29.69999999999999" width="0.8" height="3.5" fill="#3e3e40"/><rect x="525.35" y="29.69999999999999" width="0.8" height="3.5" fill="#3e3e40"/><rect x="542.05" y="29.69999999999999" width="0.8" height="3.5" fill="#3e3e40"/><rect x="558.75" y="29.69999999999999" width="0.8" height="3.5" fill="#3e3e40"/><rect x="575.45" y="29.69999999999999" width="0.8" height="3.5" fill="#3e3e40"/><rect x="0" y="98.63" width="600" height="0.8" fill="#2e2430"/><rect x="0" y="163.96" width="600" height="0.8" fill="#2e2430"/><rect x="0" y="229.29" width="600" height="0.8" fill="#2e2430"/><rect x="0" y="294.62" width="600" height="0.8" fill="#2e2430"/><rect x="0" y="359.95" width="600" height="0.8" fill="#2e2430"/><rect x="0" y="425.28" width="600" height="0.8" fill="#2e2430"/></svg><div class="t" style="left:481.0px;top:194.27px;font-size:8.3px;color:#8e8e92;font-weight:400;">1</div><div class="t" style="left:547.8px;top:194.27px;font-size:8.3px;color:#8e8e92;font-weight:400;">2</div><div class="t" style="left:614.5999999999999px;top:194.27px;font-size:8.3px;color:#8e8e92;font-weight:400;">3</div><div class="t" style="left:681.3999999999999px;top:194.27px;font-size:8.3px;color:#8e8e92;font-weight:400;">4</div><div class="t" style="left:748.1999999999999px;top:194.27px;font-size:8.3px;color:#8e8e92;font-weight:400;">5</div><div class="t" style="left:815.0px;top:194.27px;font-size:8.3px;color:#8e8e92;font-weight:400;">6</div><div class="t" style="left:881.8px;top:194.27px;font-size:8.3px;color:#8e8e92;font-weight:400;">7</div><div class="t" style="left:948.5999999999999px;top:194.27px;font-size:8.3px;color:#8e8e92;font-weight:400;">8</div><div class="t" style="left:1015.3999999999999px;top:194.27px;font-size:8.3px;color:#8e8e92;font-weight:400;">9</div><div class="t" style="left:787.6px;top:254.20px;font-size:7.8px;color:#a02a98;font-weight:400;letter-spacing:0.1px;-webkit-text-stroke:0.25px #a02a98">Drum Kit Mix</div><div style="left:478.10px;top:291.43px;width:534.00px;height:63.83px;background:#3770b3;border-radius:4px"></div><svg style="position:absolute;left:740.9px;top:290.92999999999995px;" width="8" height="64.83000000000004" viewBox="0 0 8 64.83000000000004"><path d="M0 0 H8 Q4.6 0.6 4 4 Q3.4 0.6 0 0 Z" fill="#120c12"/><path d="M0 64.83000000000004 H8 Q4.6 64.23000000000005 4 60.83000000000004 Q3.4 64.23000000000005 0 64.83000000000004 Z" fill="#120c12"/></svg><div class="t" style="left:481.6px;top:293.86px;font-size:8px;color:#e9eff7;font-weight:400;letter-spacing:0.1px;-webkit-text-stroke:0.3px #e9eff7">Kick</div><div style="left:478.10px;top:356.96px;width:534.00px;height:63.33px;background:#3770b3;border-radius:4px"></div><div class="t" style="left:481.6px;top:359.39px;font-size:8px;color:#e9eff7;font-weight:400;letter-spacing:0.1px;-webkit-text-stroke:0.3px #e9eff7">Snare</div><div style="left:478.10px;top:421.89px;width:534.00px;height:63.73px;background:#3770b3;border-radius:4px"></div><svg style="position:absolute;left:607.3px;top:421.39px;" width="8" height="64.73000000000002" viewBox="0 0 8 64.73000000000002"><path d="M0 0 H8 Q4.6 0.6 4 4 Q3.4 0.6 0 0 Z" fill="#120c12"/><path d="M0 64.73000000000002 H8 Q4.6 64.13000000000002 4 60.73000000000002 Q3.4 64.13000000000002 0 64.73000000000002 Z" fill="#120c12"/></svg><svg style="position:absolute;left:740.9px;top:421.39px;" width="8" height="64.73000000000002" viewBox="0 0 8 64.73000000000002"><path d="M0 0 H8 Q4.6 0.6 4 4 Q3.4 0.6 0 0 Z" fill="#120c12"/><path d="M0 64.73000000000002 H8 Q4.6 64.13000000000002 4 60.73000000000002 Q3.4 64.13000000000002 0 64.73000000000002 Z" fill="#120c12"/></svg><svg style="position:absolute;left:874.5px;top:421.39px;" width="8" height="64.73000000000002" viewBox="0 0 8 64.73000000000002"><path d="M0 0 H8 Q4.6 0.6 4 4 Q3.4 0.6 0 0 Z" fill="#120c12"/><path d="M0 64.73000000000002 H8 Q4.6 64.13000000000002 4 60.73000000000002 Q3.4 64.13000000000002 0 64.73000000000002 Z" fill="#120c12"/></svg><div class="t" style="left:481.6px;top:424.32px;font-size:8px;color:#e9eff7;font-weight:400;letter-spacing:0.1px;-webkit-text-stroke:0.3px #e9eff7">Hi-hat</div><div style="left:478.10px;top:487.62px;width:534.00px;height:63.33px;background:#3770b3;border-radius:4px"></div><svg style="position:absolute;left:740.9px;top:487.12px;" width="8" height="64.32999999999993" viewBox="0 0 8 64.32999999999993"><path d="M0 0 H8 Q4.6 0.6 4 4 Q3.4 0.6 0 0 Z" fill="#120c12"/><path d="M0 64.32999999999993 H8 Q4.6 63.729999999999926 4 60.32999999999993 Q3.4 63.729999999999926 0 64.32999999999993 Z" fill="#120c12"/></svg><div class="t" style="left:481.6px;top:490.05px;font-size:8px;color:#e9eff7;font-weight:400;letter-spacing:0.1px;-webkit-text-stroke:0.3px #e9eff7">Shaker</div><div style="left:478.10px;top:553.25px;width:534.00px;height:63.03px;background:#3770b3;border-radius:4px"></div><svg style="position:absolute;left:740.9px;top:552.7499999999999px;" width="8" height="64.0300000000002" viewBox="0 0 8 64.0300000000002"><path d="M0 0 H8 Q4.6 0.6 4 4 Q3.4 0.6 0 0 Z" fill="#120c12"/><path d="M0 64.0300000000002 H8 Q4.6 63.4300000000002 4 60.0300000000002 Q3.4 63.4300000000002 0 64.0300000000002 Z" fill="#120c12"/></svg><div class="t" style="left:481.6px;top:555.68px;font-size:8px;color:#e9eff7;font-weight:400;letter-spacing:0.1px;-webkit-text-stroke:0.3px #e9eff7">Topper</div><svg style="position:absolute;left:0px;top:0px;pointer-events:none" width="1068" height="690" viewBox="0 0 1068 690"><rect x="478" y="328.0" width="266.9" height="1.6" fill="#a9c6e6"/><rect x="744.9" y="328.0" width="267.19999999999993" height="1.6" fill="#6f9cd2"/><path d="M478.60 328.80 L478.60 314.52 L479.25 312.00 L481.20 312.00 L481.20 322.30 L484.40 328.80 L481.20 335.30 L481.20 345.60 L479.25 345.60 L478.60 343.08 Z" fill="#eef5fc"/><path d="M502.10 328.80 L502.10 314.52 L502.75 312.00 L504.70 312.00 L504.70 322.30 L507.90 328.80 L504.70 335.30 L504.70 345.60 L502.75 345.60 L502.10 343.08 Z" fill="#eef5fc"/><path d="M535.80 328.80 L535.80 314.52 L536.45 312.00 L538.40 312.00 L538.40 322.30 L541.60 328.80 L538.40 335.30 L538.40 345.60 L536.45 345.60 L535.80 343.08 Z" fill="#eef5fc"/><path d="M561.00 328.80 L561.00 314.52 L561.65 312.00 L563.60 312.00 L563.60 322.30 L566.80 328.80 L563.60 335.30 L563.60 345.60 L561.65 345.60 L561.00 343.08 Z" fill="#eef5fc"/><path d="M603.10 328.80 L603.10 314.52 L603.75 312.00 L605.70 312.00 L605.70 322.30 L608.90 328.80 L605.70 335.30 L605.70 345.60 L603.75 345.60 L603.10 343.08 Z" fill="#eef5fc"/><path d="M611.30 328.80 L611.30 314.52 L611.95 312.00 L613.90 312.00 L613.90 322.30 L617.10 328.80 L613.90 335.30 L613.90 345.60 L611.95 345.60 L611.30 343.08 Z" fill="#eef5fc"/><path d="M669.60 328.80 L669.60 314.52 L670.25 312.00 L672.20 312.00 L672.20 322.30 L675.40 328.80 L672.20 335.30 L672.20 345.60 L670.25 345.60 L669.60 343.08 Z" fill="#eef5fc"/><path d="M694.60 328.80 L694.60 314.52 L695.25 312.00 L697.20 312.00 L697.20 322.30 L700.40 328.80 L697.20 335.30 L697.20 345.60 L695.25 345.60 L694.60 343.08 Z" fill="#eef5fc"/><path d="M727.80 328.80 L727.80 314.52 L728.45 312.00 L730.40 312.00 L730.40 322.30 L733.60 328.80 L730.40 335.30 L730.40 345.60 L728.45 345.60 L727.80 343.08 Z" fill="#eef5fc"/><path d="M736.10 328.80 L736.10 314.52 L736.75 312.00 L738.70 312.00 L738.70 322.30 L741.90 328.80 L738.70 335.30 L738.70 345.60 L736.75 345.60 L736.10 343.08 Z" fill="#eef5fc"/><path d="M745.80 328.80 L745.80 314.52 L746.45 312.00 L748.40 312.00 L748.40 322.30 L751.60 328.80 L748.40 335.30 L748.40 345.60 L746.45 345.60 L745.80 343.08 Z" fill="#80abdc"/><path d="M769.30 328.80 L769.30 314.52 L769.95 312.00 L771.90 312.00 L771.90 322.30 L775.10 328.80 L771.90 335.30 L771.90 345.60 L769.95 345.60 L769.30 343.08 Z" fill="#80abdc"/><path d="M803.00 328.80 L803.00 314.52 L803.65 312.00 L805.60 312.00 L805.60 322.30 L808.80 328.80 L805.60 335.30 L805.60 345.60 L803.65 345.60 L803.00 343.08 Z" fill="#80abdc"/><path d="M828.20 328.80 L828.20 314.52 L828.85 312.00 L830.80 312.00 L830.80 322.30 L834.00 328.80 L830.80 335.30 L830.80 345.60 L828.85 345.60 L828.20 343.08 Z" fill="#80abdc"/><path d="M870.30 328.80 L870.30 314.52 L870.95 312.00 L872.90 312.00 L872.90 322.30 L876.10 328.80 L872.90 335.30 L872.90 345.60 L870.95 345.60 L870.30 343.08 Z" fill="#80abdc"/><path d="M878.50 328.80 L878.50 314.52 L879.15 312.00 L881.10 312.00 L881.10 322.30 L884.30 328.80 L881.10 335.30 L881.10 345.60 L879.15 345.60 L878.50 343.08 Z" fill="#80abdc"/><path d="M936.80 328.80 L936.80 314.52 L937.45 312.00 L939.40 312.00 L939.40 322.30 L942.60 328.80 L939.40 335.30 L939.40 345.60 L937.45 345.60 L936.80 343.08 Z" fill="#80abdc"/><path d="M961.80 328.80 L961.80 314.52 L962.45 312.00 L964.40 312.00 L964.40 322.30 L967.60 328.80 L964.40 335.30 L964.40 345.60 L962.45 345.60 L961.80 343.08 Z" fill="#80abdc"/><path d="M995.00 328.80 L995.00 314.52 L995.65 312.00 L997.60 312.00 L997.60 322.30 L1000.80 328.80 L997.60 335.30 L997.60 345.60 L995.65 345.60 L995.00 343.08 Z" fill="#80abdc"/><path d="M1003.30 328.80 L1003.30 314.52 L1003.95 312.00 L1005.90 312.00 L1005.90 322.30 L1009.10 328.80 L1005.90 335.30 L1005.90 345.60 L1003.95 345.60 L1003.30 343.08 Z" fill="#80abdc"/><rect x="478" y="380.85" width="534.0999999999999" height="1.3" fill="#eef5fc"/><path d="M485.20 381.50 L485.20 377.59 L485.60 376.90 L486.80 376.90 L486.80 379.00 L488.00 381.50 L486.80 384.00 L486.80 386.10 L485.60 386.10 L485.20 385.41 Z" fill="#eef5fc"/><path d="M602.50 381.50 L602.50 377.59 L602.90 376.90 L604.10 376.90 L604.10 379.00 L605.30 381.50 L604.10 384.00 L604.10 386.10 L602.90 386.10 L602.50 385.41 Z" fill="#eef5fc"/><path d="M618.80 381.50 L618.80 377.59 L619.20 376.90 L620.40 376.90 L620.40 379.00 L621.60 381.50 L620.40 384.00 L620.40 386.10 L619.20 386.10 L618.80 385.41 Z" fill="#eef5fc"/><path d="M736.10 381.50 L736.10 377.59 L736.50 376.90 L737.70 376.90 L737.70 379.00 L738.90 381.50 L737.70 384.00 L737.70 386.10 L736.50 386.10 L736.10 385.41 Z" fill="#eef5fc"/><path d="M752.40 381.50 L752.40 377.59 L752.80 376.90 L754.00 376.90 L754.00 379.00 L755.20 381.50 L754.00 384.00 L754.00 386.10 L752.80 386.10 L752.40 385.41 Z" fill="#eef5fc"/><path d="M869.70 381.50 L869.70 377.59 L870.10 376.90 L871.30 376.90 L871.30 379.00 L872.50 381.50 L871.30 384.00 L871.30 386.10 L870.10 386.10 L869.70 385.41 Z" fill="#eef5fc"/><path d="M886.00 381.50 L886.00 377.59 L886.40 376.90 L887.60 376.90 L887.60 379.00 L888.80 381.50 L887.60 384.00 L887.60 386.10 L886.40 386.10 L886.00 385.41 Z" fill="#eef5fc"/><path d="M1003.30 381.50 L1003.30 377.59 L1003.70 376.90 L1004.90 376.90 L1004.90 379.00 L1006.10 381.50 L1004.90 384.00 L1004.90 386.10 L1003.70 386.10 L1003.30 385.41 Z" fill="#eef5fc"/><rect x="478" y="405.65000000000003" width="534.0999999999999" height="1.3" fill="#eef5fc"/><path d="M485.20 406.30 L485.20 402.39 L485.60 401.70 L486.80 401.70 L486.80 403.80 L488.00 406.30 L486.80 408.80 L486.80 410.90 L485.60 410.90 L485.20 410.21 Z" fill="#eef5fc"/><path d="M602.50 406.30 L602.50 402.39 L602.90 401.70 L604.10 401.70 L604.10 403.80 L605.30 406.30 L604.10 408.80 L604.10 410.90 L602.90 410.90 L602.50 410.21 Z" fill="#eef5fc"/><path d="M618.80 406.30 L618.80 402.39 L619.20 401.70 L620.40 401.70 L620.40 403.80 L621.60 406.30 L620.40 408.80 L620.40 410.90 L619.20 410.90 L618.80 410.21 Z" fill="#eef5fc"/><path d="M736.10 406.30 L736.10 402.39 L736.50 401.70 L737.70 401.70 L737.70 403.80 L738.90 406.30 L737.70 408.80 L737.70 410.90 L736.50 410.90 L736.10 410.21 Z" fill="#eef5fc"/><path d="M752.40 406.30 L752.40 402.39 L752.80 401.70 L754.00 401.70 L754.00 403.80 L755.20 406.30 L754.00 408.80 L754.00 410.90 L752.80 410.90 L752.40 410.21 Z" fill="#eef5fc"/><path d="M869.70 406.30 L869.70 402.39 L870.10 401.70 L871.30 401.70 L871.30 403.80 L872.50 406.30 L871.30 408.80 L871.30 410.90 L870.10 410.90 L869.70 410.21 Z" fill="#eef5fc"/><path d="M886.00 406.30 L886.00 402.39 L886.40 401.70 L887.60 401.70 L887.60 403.80 L888.80 406.30 L887.60 408.80 L887.60 410.90 L886.40 410.90 L886.00 410.21 Z" fill="#eef5fc"/><path d="M1003.30 406.30 L1003.30 402.39 L1003.70 401.70 L1004.90 401.70 L1004.90 403.80 L1006.10 406.30 L1004.90 408.80 L1004.90 410.90 L1003.70 410.90 L1003.30 410.21 Z" fill="#eef5fc"/><rect x="477.7" y="459.1" width="133.6" height="1.4" fill="#a9c6e6"/><rect x="485.30" y="452.68" width="1.1" height="14.62" fill="#eef5fc"/><path d="M485.10 456.95 L486.75 457.70 L487.85 459.8 L486.75 461.90 L485.10 462.65 Z" fill="#eef5fc"/><rect x="493.65" y="443.03" width="1.1" height="36.27" fill="#eef5fc"/><path d="M493.45 452.39 L495.10 454.34 L496.20 459.8 L495.10 465.26 L493.45 467.21 Z" fill="#eef5fc"/><rect x="502.00" y="450.30" width="1.1" height="19.50" fill="#eef5fc"/><path d="M501.80 456.00 L503.45 457.00 L504.55 459.8 L503.45 462.60 L501.80 463.60 Z" fill="#eef5fc"/><rect x="510.35" y="444.75" width="1.1" height="32.55" fill="#eef5fc"/><path d="M510.15 453.15 L511.80 454.90 L512.90 459.8 L511.80 464.70 L510.15 466.45 Z" fill="#eef5fc"/><rect x="518.70" y="451.73" width="1.1" height="16.57" fill="#eef5fc"/><path d="M518.50 456.57 L520.15 457.42 L521.25 459.8 L520.15 462.18 L518.50 463.03 Z" fill="#eef5fc"/><rect x="527.05" y="445.61" width="1.1" height="30.69" fill="#eef5fc"/><path d="M526.85 453.53 L528.50 455.18 L529.60 459.8 L528.50 464.42 L526.85 466.07 Z" fill="#eef5fc"/><rect x="535.40" y="451.25" width="1.1" height="17.55" fill="#eef5fc"/><path d="M535.20 456.38 L536.85 457.28 L537.95 459.8 L536.85 462.32 L535.20 463.22 Z" fill="#eef5fc"/><rect x="543.75" y="444.75" width="1.1" height="32.55" fill="#eef5fc"/><path d="M543.55 453.15 L545.20 454.90 L546.30 459.8 L545.20 464.70 L543.55 466.45 Z" fill="#eef5fc"/><rect x="552.10" y="451.25" width="1.1" height="17.55" fill="#eef5fc"/><path d="M551.90 456.38 L553.55 457.28 L554.65 459.8 L553.55 462.32 L551.90 463.22 Z" fill="#eef5fc"/><rect x="560.45" y="446.04" width="1.1" height="29.76" fill="#eef5fc"/><path d="M560.25 453.72 L561.90 455.32 L563.00 459.8 L561.90 464.28 L560.25 465.88 Z" fill="#eef5fc"/><rect x="568.80" y="450.78" width="1.1" height="18.52" fill="#eef5fc"/><path d="M568.60 456.19 L570.25 457.14 L571.35 459.8 L570.25 462.46 L568.60 463.41 Z" fill="#eef5fc"/><rect x="577.15" y="444.75" width="1.1" height="32.55" fill="#eef5fc"/><path d="M576.95 453.15 L578.60 454.90 L579.70 459.8 L578.60 464.70 L576.95 466.45 Z" fill="#eef5fc"/><rect x="585.50" y="452.20" width="1.1" height="15.60" fill="#eef5fc"/><path d="M585.30 456.76 L586.95 457.56 L588.05 459.8 L586.95 462.04 L585.30 462.84 Z" fill="#eef5fc"/><rect x="593.85" y="443.89" width="1.1" height="34.41" fill="#eef5fc"/><path d="M593.65 452.77 L595.30 454.62 L596.40 459.8 L595.30 464.98 L593.65 466.83 Z" fill="#eef5fc"/><rect x="602.20" y="452.68" width="1.1" height="14.62" fill="#eef5fc"/><path d="M602.00 456.95 L603.65 457.70 L604.75 459.8 L603.65 461.90 L602.00 462.65 Z" fill="#eef5fc"/><rect x="611.3" y="459.1" width="133.6" height="1.4" fill="#6f9cd2"/><rect x="618.90" y="452.68" width="1.1" height="14.62" fill="#80abdc"/><path d="M618.70 456.95 L620.35 457.70 L621.45 459.8 L620.35 461.90 L618.70 462.65 Z" fill="#80abdc"/><rect x="627.25" y="443.03" width="1.1" height="36.27" fill="#80abdc"/><path d="M627.05 452.39 L628.70 454.34 L629.80 459.8 L628.70 465.26 L627.05 467.21 Z" fill="#80abdc"/><rect x="635.60" y="450.30" width="1.1" height="19.50" fill="#80abdc"/><path d="M635.40 456.00 L637.05 457.00 L638.15 459.8 L637.05 462.60 L635.40 463.60 Z" fill="#80abdc"/><rect x="643.95" y="444.75" width="1.1" height="32.55" fill="#80abdc"/><path d="M643.75 453.15 L645.40 454.90 L646.50 459.8 L645.40 464.70 L643.75 466.45 Z" fill="#80abdc"/><rect x="652.30" y="451.73" width="1.1" height="16.57" fill="#80abdc"/><path d="M652.10 456.57 L653.75 457.42 L654.85 459.8 L653.75 462.18 L652.10 463.03 Z" fill="#80abdc"/><rect x="660.65" y="445.61" width="1.1" height="30.69" fill="#80abdc"/><path d="M660.45 453.53 L662.10 455.18 L663.20 459.8 L662.10 464.42 L660.45 466.07 Z" fill="#80abdc"/><rect x="669.00" y="451.25" width="1.1" height="17.55" fill="#80abdc"/><path d="M668.80 456.38 L670.45 457.28 L671.55 459.8 L670.45 462.32 L668.80 463.22 Z" fill="#80abdc"/><rect x="677.35" y="444.75" width="1.1" height="32.55" fill="#80abdc"/><path d="M677.15 453.15 L678.80 454.90 L679.90 459.8 L678.80 464.70 L677.15 466.45 Z" fill="#80abdc"/><rect x="685.70" y="451.25" width="1.1" height="17.55" fill="#80abdc"/><path d="M685.50 456.38 L687.15 457.28 L688.25 459.8 L687.15 462.32 L685.50 463.22 Z" fill="#80abdc"/><rect x="694.05" y="446.04" width="1.1" height="29.76" fill="#80abdc"/><path d="M693.85 453.72 L695.50 455.32 L696.60 459.8 L695.50 464.28 L693.85 465.88 Z" fill="#80abdc"/><rect x="702.40" y="450.78" width="1.1" height="18.52" fill="#80abdc"/><path d="M702.20 456.19 L703.85 457.14 L704.95 459.8 L703.85 462.46 L702.20 463.41 Z" fill="#80abdc"/><rect x="710.75" y="444.75" width="1.1" height="32.55" fill="#80abdc"/><path d="M710.55 453.15 L712.20 454.90 L713.30 459.8 L712.20 464.70 L710.55 466.45 Z" fill="#80abdc"/><rect x="719.10" y="452.20" width="1.1" height="15.60" fill="#80abdc"/><path d="M718.90 456.76 L720.55 457.56 L721.65 459.8 L720.55 462.04 L718.90 462.84 Z" fill="#80abdc"/><rect x="727.45" y="443.89" width="1.1" height="34.41" fill="#80abdc"/><path d="M727.25 452.77 L728.90 454.62 L730.00 459.8 L728.90 464.98 L727.25 466.83 Z" fill="#80abdc"/><rect x="735.80" y="452.68" width="1.1" height="14.62" fill="#80abdc"/><path d="M735.60 456.95 L737.25 457.70 L738.35 459.8 L737.25 461.90 L735.60 462.65 Z" fill="#80abdc"/><rect x="744.9" y="459.1" width="133.6" height="1.4" fill="#6f9cd2"/><rect x="752.50" y="452.68" width="1.1" height="14.62" fill="#80abdc"/><path d="M752.30 456.95 L753.95 457.70 L755.05 459.8 L753.95 461.90 L752.30 462.65 Z" fill="#80abdc"/><rect x="760.85" y="443.03" width="1.1" height="36.27" fill="#80abdc"/><path d="M760.65 452.39 L762.30 454.34 L763.40 459.8 L762.30 465.26 L760.65 467.21 Z" fill="#80abdc"/><rect x="769.20" y="450.30" width="1.1" height="19.50" fill="#80abdc"/><path d="M769.00 456.00 L770.65 457.00 L771.75 459.8 L770.65 462.60 L769.00 463.60 Z" fill="#80abdc"/><rect x="777.55" y="444.75" width="1.1" height="32.55" fill="#80abdc"/><path d="M777.35 453.15 L779.00 454.90 L780.10 459.8 L779.00 464.70 L777.35 466.45 Z" fill="#80abdc"/><rect x="785.90" y="451.73" width="1.1" height="16.57" fill="#80abdc"/><path d="M785.70 456.57 L787.35 457.42 L788.45 459.8 L787.35 462.18 L785.70 463.03 Z" fill="#80abdc"/><rect x="794.25" y="445.61" width="1.1" height="30.69" fill="#80abdc"/><path d="M794.05 453.53 L795.70 455.18 L796.80 459.8 L795.70 464.42 L794.05 466.07 Z" fill="#80abdc"/><rect x="802.60" y="451.25" width="1.1" height="17.55" fill="#80abdc"/><path d="M802.40 456.38 L804.05 457.28 L805.15 459.8 L804.05 462.32 L802.40 463.22 Z" fill="#80abdc"/><rect x="810.95" y="444.75" width="1.1" height="32.55" fill="#80abdc"/><path d="M810.75 453.15 L812.40 454.90 L813.50 459.8 L812.40 464.70 L810.75 466.45 Z" fill="#80abdc"/><rect x="819.30" y="451.25" width="1.1" height="17.55" fill="#80abdc"/><path d="M819.10 456.38 L820.75 457.28 L821.85 459.8 L820.75 462.32 L819.10 463.22 Z" fill="#80abdc"/><rect x="827.65" y="446.04" width="1.1" height="29.76" fill="#80abdc"/><path d="M827.45 453.72 L829.10 455.32 L830.20 459.8 L829.10 464.28 L827.45 465.88 Z" fill="#80abdc"/><rect x="836.00" y="450.78" width="1.1" height="18.52" fill="#80abdc"/><path d="M835.80 456.19 L837.45 457.14 L838.55 459.8 L837.45 462.46 L835.80 463.41 Z" fill="#80abdc"/><rect x="844.35" y="444.75" width="1.1" height="32.55" fill="#80abdc"/><path d="M844.15 453.15 L845.80 454.90 L846.90 459.8 L845.80 464.70 L844.15 466.45 Z" fill="#80abdc"/><rect x="852.70" y="452.20" width="1.1" height="15.60" fill="#80abdc"/><path d="M852.50 456.76 L854.15 457.56 L855.25 459.8 L854.15 462.04 L852.50 462.84 Z" fill="#80abdc"/><rect x="861.05" y="443.89" width="1.1" height="34.41" fill="#80abdc"/><path d="M860.85 452.77 L862.50 454.62 L863.60 459.8 L862.50 464.98 L860.85 466.83 Z" fill="#80abdc"/><rect x="869.40" y="452.68" width="1.1" height="14.62" fill="#80abdc"/><path d="M869.20 456.95 L870.85 457.70 L871.95 459.8 L870.85 461.90 L869.20 462.65 Z" fill="#80abdc"/><rect x="878.5" y="459.1" width="133.6" height="1.4" fill="#6f9cd2"/><rect x="886.10" y="452.68" width="1.1" height="14.62" fill="#80abdc"/><path d="M885.90 456.95 L887.55 457.70 L888.65 459.8 L887.55 461.90 L885.90 462.65 Z" fill="#80abdc"/><rect x="894.45" y="443.03" width="1.1" height="36.27" fill="#80abdc"/><path d="M894.25 452.39 L895.90 454.34 L897.00 459.8 L895.90 465.26 L894.25 467.21 Z" fill="#80abdc"/><rect x="902.80" y="450.30" width="1.1" height="19.50" fill="#80abdc"/><path d="M902.60 456.00 L904.25 457.00 L905.35 459.8 L904.25 462.60 L902.60 463.60 Z" fill="#80abdc"/><rect x="911.15" y="444.75" width="1.1" height="32.55" fill="#80abdc"/><path d="M910.95 453.15 L912.60 454.90 L913.70 459.8 L912.60 464.70 L910.95 466.45 Z" fill="#80abdc"/><rect x="919.50" y="451.73" width="1.1" height="16.57" fill="#80abdc"/><path d="M919.30 456.57 L920.95 457.42 L922.05 459.8 L920.95 462.18 L919.30 463.03 Z" fill="#80abdc"/><rect x="927.85" y="445.61" width="1.1" height="30.69" fill="#80abdc"/><path d="M927.65 453.53 L929.30 455.18 L930.40 459.8 L929.30 464.42 L927.65 466.07 Z" fill="#80abdc"/><rect x="936.20" y="451.25" width="1.1" height="17.55" fill="#80abdc"/><path d="M936.00 456.38 L937.65 457.28 L938.75 459.8 L937.65 462.32 L936.00 463.22 Z" fill="#80abdc"/><rect x="944.55" y="444.75" width="1.1" height="32.55" fill="#80abdc"/><path d="M944.35 453.15 L946.00 454.90 L947.10 459.8 L946.00 464.70 L944.35 466.45 Z" fill="#80abdc"/><rect x="952.90" y="451.25" width="1.1" height="17.55" fill="#80abdc"/><path d="M952.70 456.38 L954.35 457.28 L955.45 459.8 L954.35 462.32 L952.70 463.22 Z" fill="#80abdc"/><rect x="961.25" y="446.04" width="1.1" height="29.76" fill="#80abdc"/><path d="M961.05 453.72 L962.70 455.32 L963.80 459.8 L962.70 464.28 L961.05 465.88 Z" fill="#80abdc"/><rect x="969.60" y="450.78" width="1.1" height="18.52" fill="#80abdc"/><path d="M969.40 456.19 L971.05 457.14 L972.15 459.8 L971.05 462.46 L969.40 463.41 Z" fill="#80abdc"/><rect x="977.95" y="444.75" width="1.1" height="32.55" fill="#80abdc"/><path d="M977.75 453.15 L979.40 454.90 L980.50 459.8 L979.40 464.70 L977.75 466.45 Z" fill="#80abdc"/><rect x="986.30" y="452.20" width="1.1" height="15.60" fill="#80abdc"/><path d="M986.10 456.76 L987.75 457.56 L988.85 459.8 L987.75 462.04 L986.10 462.84 Z" fill="#80abdc"/><rect x="994.65" y="443.89" width="1.1" height="34.41" fill="#80abdc"/><path d="M994.45 452.77 L996.10 454.62 L997.20 459.8 L996.10 464.98 L994.45 466.83 Z" fill="#80abdc"/><rect x="1003.00" y="452.68" width="1.1" height="14.62" fill="#80abdc"/><path d="M1002.80 456.95 L1004.45 457.70 L1005.55 459.8 L1004.45 461.90 L1002.80 462.65 Z" fill="#80abdc"/><rect x="478" y="511.7" width="266.9" height="1.4" fill="#eef5fc"/><rect x="744.9" y="511.7" width="267.19999999999993" height="1.4" fill="#6f9cd2"/><path d="M485.10 512.40 L485.10 508.56 L485.40 507.88 L486.30 507.88 L486.30 509.92 L488.50 512.40 L486.30 514.88 L486.30 516.91 L485.40 516.91 L485.10 516.24 Z" fill="#eef5fc"/><path d="M489.30 512.40 L489.30 509.17 L489.60 508.60 L490.50 508.60 L490.50 510.31 L492.70 512.40 L490.50 514.49 L490.50 516.20 L489.60 516.20 L489.30 515.63 Z" fill="#eef5fc"/><ellipse cx="481.30" cy="512.4" rx="1.3" ry="1.1" fill="#eef5fc"/><path d="M501.80 512.40 L501.80 509.37 L502.10 508.83 L503.00 508.83 L503.00 510.44 L505.20 512.40 L503.00 514.36 L503.00 515.97 L502.10 515.97 L501.80 515.43 Z" fill="#eef5fc"/><path d="M506.00 512.40 L506.00 508.69 L506.30 508.03 L507.20 508.03 L507.20 510.00 L509.40 512.40 L507.20 514.80 L507.20 516.77 L506.30 516.77 L506.00 516.11 Z" fill="#eef5fc"/><ellipse cx="498.00" cy="512.4" rx="1.3" ry="1.1" fill="#eef5fc"/><path d="M518.50 512.40 L518.50 508.83 L518.80 508.20 L519.70 508.20 L519.70 510.09 L521.90 512.40 L519.70 514.71 L519.70 516.60 L518.80 516.60 L518.50 515.97 Z" fill="#eef5fc"/><path d="M522.70 512.40 L522.70 509.41 L523.00 508.88 L523.90 508.88 L523.90 510.47 L526.10 512.40 L523.90 514.33 L523.90 515.91 L523.00 515.91 L522.70 515.39 Z" fill="#eef5fc"/><ellipse cx="514.70" cy="512.4" rx="1.3" ry="1.1" fill="#eef5fc"/><path d="M535.20 512.40 L535.20 508.29 L535.50 507.57 L536.40 507.57 L536.40 509.74 L538.60 512.40 L536.40 515.06 L536.40 517.23 L535.50 517.23 L535.20 516.51 Z" fill="#eef5fc"/><path d="M539.40 512.40 L539.40 508.93 L539.70 508.31 L540.60 508.31 L540.60 510.15 L542.80 512.40 L540.60 514.65 L540.60 516.49 L539.70 516.49 L539.40 515.87 Z" fill="#eef5fc"/><ellipse cx="531.40" cy="512.4" rx="1.3" ry="1.1" fill="#eef5fc"/><path d="M551.90 512.40 L551.90 509.10 L552.20 508.51 L553.10 508.51 L553.10 510.26 L555.30 512.40 L553.10 514.54 L553.10 516.28 L552.20 516.28 L551.90 515.70 Z" fill="#eef5fc"/><path d="M556.10 512.40 L556.10 509.65 L556.40 509.17 L557.30 509.17 L557.30 510.62 L559.50 512.40 L557.30 514.18 L557.30 515.63 L556.40 515.63 L556.10 515.15 Z" fill="#eef5fc"/><ellipse cx="548.10" cy="512.4" rx="1.3" ry="1.1" fill="#eef5fc"/><path d="M568.60 512.40 L568.60 508.56 L568.90 507.88 L569.80 507.88 L569.80 509.92 L572.00 512.40 L569.80 514.88 L569.80 516.91 L568.90 516.91 L568.60 516.24 Z" fill="#eef5fc"/><path d="M572.80 512.40 L572.80 509.17 L573.10 508.60 L574.00 508.60 L574.00 510.31 L576.20 512.40 L574.00 514.49 L574.00 516.20 L573.10 516.20 L572.80 515.63 Z" fill="#eef5fc"/><ellipse cx="564.80" cy="512.4" rx="1.3" ry="1.1" fill="#eef5fc"/><path d="M585.30 512.40 L585.30 509.37 L585.60 508.83 L586.50 508.83 L586.50 510.44 L588.70 512.40 L586.50 514.36 L586.50 515.97 L585.60 515.97 L585.30 515.43 Z" fill="#eef5fc"/><path d="M589.50 512.40 L589.50 508.69 L589.80 508.03 L590.70 508.03 L590.70 510.00 L592.90 512.40 L590.70 514.80 L590.70 516.77 L589.80 516.77 L589.50 516.11 Z" fill="#eef5fc"/><ellipse cx="581.50" cy="512.4" rx="1.3" ry="1.1" fill="#eef5fc"/><path d="M602.00 512.40 L602.00 508.83 L602.30 508.20 L603.20 508.20 L603.20 510.09 L605.40 512.40 L603.20 514.71 L603.20 516.60 L602.30 516.60 L602.00 515.97 Z" fill="#eef5fc"/><path d="M606.20 512.40 L606.20 509.41 L606.50 508.88 L607.40 508.88 L607.40 510.47 L609.60 512.40 L607.40 514.33 L607.40 515.91 L606.50 515.91 L606.20 515.39 Z" fill="#eef5fc"/><ellipse cx="598.20" cy="512.4" rx="1.3" ry="1.1" fill="#eef5fc"/><path d="M618.70 512.40 L618.70 508.29 L619.00 507.57 L619.90 507.57 L619.90 509.74 L622.10 512.40 L619.90 515.06 L619.90 517.23 L619.00 517.23 L618.70 516.51 Z" fill="#eef5fc"/><path d="M622.90 512.40 L622.90 508.93 L623.20 508.31 L624.10 508.31 L624.10 510.15 L626.30 512.40 L624.10 514.65 L624.10 516.49 L623.20 516.49 L622.90 515.87 Z" fill="#eef5fc"/><ellipse cx="614.90" cy="512.4" rx="1.3" ry="1.1" fill="#eef5fc"/><path d="M635.40 512.40 L635.40 509.10 L635.70 508.51 L636.60 508.51 L636.60 510.26 L638.80 512.40 L636.60 514.54 L636.60 516.28 L635.70 516.28 L635.40 515.70 Z" fill="#eef5fc"/><path d="M639.60 512.40 L639.60 509.65 L639.90 509.17 L640.80 509.17 L640.80 510.62 L643.00 512.40 L640.80 514.18 L640.80 515.63 L639.90 515.63 L639.60 515.15 Z" fill="#eef5fc"/><ellipse cx="631.60" cy="512.4" rx="1.3" ry="1.1" fill="#eef5fc"/><path d="M652.10 512.40 L652.10 508.56 L652.40 507.88 L653.30 507.88 L653.30 509.92 L655.50 512.40 L653.30 514.88 L653.30 516.91 L652.40 516.91 L652.10 516.24 Z" fill="#eef5fc"/><path d="M656.30 512.40 L656.30 509.17 L656.60 508.60 L657.50 508.60 L657.50 510.31 L659.70 512.40 L657.50 514.49 L657.50 516.20 L656.60 516.20 L656.30 515.63 Z" fill="#eef5fc"/><ellipse cx="648.30" cy="512.4" rx="1.3" ry="1.1" fill="#eef5fc"/><path d="M668.80 512.40 L668.80 509.37 L669.10 508.83 L670.00 508.83 L670.00 510.44 L672.20 512.40 L670.00 514.36 L670.00 515.97 L669.10 515.97 L668.80 515.43 Z" fill="#eef5fc"/><path d="M673.00 512.40 L673.00 508.69 L673.30 508.03 L674.20 508.03 L674.20 510.00 L676.40 512.40 L674.20 514.80 L674.20 516.77 L673.30 516.77 L673.00 516.11 Z" fill="#eef5fc"/><ellipse cx="665.00" cy="512.4" rx="1.3" ry="1.1" fill="#eef5fc"/><path d="M685.50 512.40 L685.50 508.83 L685.80 508.20 L686.70 508.20 L686.70 510.09 L688.90 512.40 L686.70 514.71 L686.70 516.60 L685.80 516.60 L685.50 515.97 Z" fill="#eef5fc"/><path d="M689.70 512.40 L689.70 509.41 L690.00 508.88 L690.90 508.88 L690.90 510.47 L693.10 512.40 L690.90 514.33 L690.90 515.91 L690.00 515.91 L689.70 515.39 Z" fill="#eef5fc"/><ellipse cx="681.70" cy="512.4" rx="1.3" ry="1.1" fill="#eef5fc"/><path d="M702.20 512.40 L702.20 508.29 L702.50 507.57 L703.40 507.57 L703.40 509.74 L705.60 512.40 L703.40 515.06 L703.40 517.23 L702.50 517.23 L702.20 516.51 Z" fill="#eef5fc"/><path d="M706.40 512.40 L706.40 508.93 L706.70 508.31 L707.60 508.31 L707.60 510.15 L709.80 512.40 L707.60 514.65 L707.60 516.49 L706.70 516.49 L706.40 515.87 Z" fill="#eef5fc"/><ellipse cx="698.40" cy="512.4" rx="1.3" ry="1.1" fill="#eef5fc"/><path d="M718.90 512.40 L718.90 509.10 L719.20 508.51 L720.10 508.51 L720.10 510.26 L722.30 512.40 L720.10 514.54 L720.10 516.28 L719.20 516.28 L718.90 515.70 Z" fill="#eef5fc"/><path d="M723.10 512.40 L723.10 509.65 L723.40 509.17 L724.30 509.17 L724.30 510.62 L726.50 512.40 L724.30 514.18 L724.30 515.63 L723.40 515.63 L723.10 515.15 Z" fill="#eef5fc"/><ellipse cx="715.10" cy="512.4" rx="1.3" ry="1.1" fill="#eef5fc"/><path d="M735.60 512.40 L735.60 508.56 L735.90 507.88 L736.80 507.88 L736.80 509.92 L739.00 512.40 L736.80 514.88 L736.80 516.91 L735.90 516.91 L735.60 516.24 Z" fill="#eef5fc"/><path d="M739.80 512.40 L739.80 509.17 L740.10 508.60 L741.00 508.60 L741.00 510.31 L743.20 512.40 L741.00 514.49 L741.00 516.20 L740.10 516.20 L739.80 515.63 Z" fill="#eef5fc"/><ellipse cx="731.80" cy="512.4" rx="1.3" ry="1.1" fill="#eef5fc"/><path d="M752.30 512.40 L752.30 509.37 L752.60 508.83 L753.50 508.83 L753.50 510.44 L755.70 512.40 L753.50 514.36 L753.50 515.97 L752.60 515.97 L752.30 515.43 Z" fill="#80abdc"/><path d="M756.50 512.40 L756.50 508.69 L756.80 508.03 L757.70 508.03 L757.70 510.00 L759.90 512.40 L757.70 514.80 L757.70 516.77 L756.80 516.77 L756.50 516.11 Z" fill="#80abdc"/><ellipse cx="748.50" cy="512.4" rx="1.3" ry="1.1" fill="#80abdc"/><path d="M769.00 512.40 L769.00 508.83 L769.30 508.20 L770.20 508.20 L770.20 510.09 L772.40 512.40 L770.20 514.71 L770.20 516.60 L769.30 516.60 L769.00 515.97 Z" fill="#80abdc"/><path d="M773.20 512.40 L773.20 509.41 L773.50 508.88 L774.40 508.88 L774.40 510.47 L776.60 512.40 L774.40 514.33 L774.40 515.91 L773.50 515.91 L773.20 515.39 Z" fill="#80abdc"/><ellipse cx="765.20" cy="512.4" rx="1.3" ry="1.1" fill="#80abdc"/><path d="M785.70 512.40 L785.70 508.29 L786.00 507.57 L786.90 507.57 L786.90 509.74 L789.10 512.40 L786.90 515.06 L786.90 517.23 L786.00 517.23 L785.70 516.51 Z" fill="#80abdc"/><path d="M789.90 512.40 L789.90 508.93 L790.20 508.31 L791.10 508.31 L791.10 510.15 L793.30 512.40 L791.10 514.65 L791.10 516.49 L790.20 516.49 L789.90 515.87 Z" fill="#80abdc"/><ellipse cx="781.90" cy="512.4" rx="1.3" ry="1.1" fill="#80abdc"/><path d="M802.40 512.40 L802.40 509.10 L802.70 508.51 L803.60 508.51 L803.60 510.26 L805.80 512.40 L803.60 514.54 L803.60 516.28 L802.70 516.28 L802.40 515.70 Z" fill="#80abdc"/><path d="M806.60 512.40 L806.60 509.65 L806.90 509.17 L807.80 509.17 L807.80 510.62 L810.00 512.40 L807.80 514.18 L807.80 515.63 L806.90 515.63 L806.60 515.15 Z" fill="#80abdc"/><ellipse cx="798.60" cy="512.4" rx="1.3" ry="1.1" fill="#80abdc"/><path d="M819.10 512.40 L819.10 508.56 L819.40 507.88 L820.30 507.88 L820.30 509.92 L822.50 512.40 L820.30 514.88 L820.30 516.91 L819.40 516.91 L819.10 516.24 Z" fill="#80abdc"/><path d="M823.30 512.40 L823.30 509.17 L823.60 508.60 L824.50 508.60 L824.50 510.31 L826.70 512.40 L824.50 514.49 L824.50 516.20 L823.60 516.20 L823.30 515.63 Z" fill="#80abdc"/><ellipse cx="815.30" cy="512.4" rx="1.3" ry="1.1" fill="#80abdc"/><path d="M835.80 512.40 L835.80 509.37 L836.10 508.83 L837.00 508.83 L837.00 510.44 L839.20 512.40 L837.00 514.36 L837.00 515.97 L836.10 515.97 L835.80 515.43 Z" fill="#80abdc"/><path d="M840.00 512.40 L840.00 508.69 L840.30 508.03 L841.20 508.03 L841.20 510.00 L843.40 512.40 L841.20 514.80 L841.20 516.77 L840.30 516.77 L840.00 516.11 Z" fill="#80abdc"/><ellipse cx="832.00" cy="512.4" rx="1.3" ry="1.1" fill="#80abdc"/><path d="M852.50 512.40 L852.50 508.83 L852.80 508.20 L853.70 508.20 L853.70 510.09 L855.90 512.40 L853.70 514.71 L853.70 516.60 L852.80 516.60 L852.50 515.97 Z" fill="#80abdc"/><path d="M856.70 512.40 L856.70 509.41 L857.00 508.88 L857.90 508.88 L857.90 510.47 L860.10 512.40 L857.90 514.33 L857.90 515.91 L857.00 515.91 L856.70 515.39 Z" fill="#80abdc"/><ellipse cx="848.70" cy="512.4" rx="1.3" ry="1.1" fill="#80abdc"/><path d="M869.20 512.40 L869.20 508.29 L869.50 507.57 L870.40 507.57 L870.40 509.74 L872.60 512.40 L870.40 515.06 L870.40 517.23 L869.50 517.23 L869.20 516.51 Z" fill="#80abdc"/><path d="M873.40 512.40 L873.40 508.93 L873.70 508.31 L874.60 508.31 L874.60 510.15 L876.80 512.40 L874.60 514.65 L874.60 516.49 L873.70 516.49 L873.40 515.87 Z" fill="#80abdc"/><ellipse cx="865.40" cy="512.4" rx="1.3" ry="1.1" fill="#80abdc"/><path d="M885.90 512.40 L885.90 509.10 L886.20 508.51 L887.10 508.51 L887.10 510.26 L889.30 512.40 L887.10 514.54 L887.10 516.28 L886.20 516.28 L885.90 515.70 Z" fill="#80abdc"/><path d="M890.10 512.40 L890.10 509.65 L890.40 509.17 L891.30 509.17 L891.30 510.62 L893.50 512.40 L891.30 514.18 L891.30 515.63 L890.40 515.63 L890.10 515.15 Z" fill="#80abdc"/><ellipse cx="882.10" cy="512.4" rx="1.3" ry="1.1" fill="#80abdc"/><path d="M902.60 512.40 L902.60 508.56 L902.90 507.88 L903.80 507.88 L903.80 509.92 L906.00 512.40 L903.80 514.88 L903.80 516.91 L902.90 516.91 L902.60 516.24 Z" fill="#80abdc"/><path d="M906.80 512.40 L906.80 509.17 L907.10 508.60 L908.00 508.60 L908.00 510.31 L910.20 512.40 L908.00 514.49 L908.00 516.20 L907.10 516.20 L906.80 515.63 Z" fill="#80abdc"/><ellipse cx="898.80" cy="512.4" rx="1.3" ry="1.1" fill="#80abdc"/><path d="M919.30 512.40 L919.30 509.37 L919.60 508.83 L920.50 508.83 L920.50 510.44 L922.70 512.40 L920.50 514.36 L920.50 515.97 L919.60 515.97 L919.30 515.43 Z" fill="#80abdc"/><path d="M923.50 512.40 L923.50 508.69 L923.80 508.03 L924.70 508.03 L924.70 510.00 L926.90 512.40 L924.70 514.80 L924.70 516.77 L923.80 516.77 L923.50 516.11 Z" fill="#80abdc"/><ellipse cx="915.50" cy="512.4" rx="1.3" ry="1.1" fill="#80abdc"/><path d="M936.00 512.40 L936.00 508.83 L936.30 508.20 L937.20 508.20 L937.20 510.09 L939.40 512.40 L937.20 514.71 L937.20 516.60 L936.30 516.60 L936.00 515.97 Z" fill="#80abdc"/><path d="M940.20 512.40 L940.20 509.41 L940.50 508.88 L941.40 508.88 L941.40 510.47 L943.60 512.40 L941.40 514.33 L941.40 515.91 L940.50 515.91 L940.20 515.39 Z" fill="#80abdc"/><ellipse cx="932.20" cy="512.4" rx="1.3" ry="1.1" fill="#80abdc"/><path d="M952.70 512.40 L952.70 508.29 L953.00 507.57 L953.90 507.57 L953.90 509.74 L956.10 512.40 L953.90 515.06 L953.90 517.23 L953.00 517.23 L952.70 516.51 Z" fill="#80abdc"/><path d="M956.90 512.40 L956.90 508.93 L957.20 508.31 L958.10 508.31 L958.10 510.15 L960.30 512.40 L958.10 514.65 L958.10 516.49 L957.20 516.49 L956.90 515.87 Z" fill="#80abdc"/><ellipse cx="948.90" cy="512.4" rx="1.3" ry="1.1" fill="#80abdc"/><path d="M969.40 512.40 L969.40 509.10 L969.70 508.51 L970.60 508.51 L970.60 510.26 L972.80 512.40 L970.60 514.54 L970.60 516.28 L969.70 516.28 L969.40 515.70 Z" fill="#80abdc"/><path d="M973.60 512.40 L973.60 509.65 L973.90 509.17 L974.80 509.17 L974.80 510.62 L977.00 512.40 L974.80 514.18 L974.80 515.63 L973.90 515.63 L973.60 515.15 Z" fill="#80abdc"/><ellipse cx="965.60" cy="512.4" rx="1.3" ry="1.1" fill="#80abdc"/><path d="M986.10 512.40 L986.10 508.56 L986.40 507.88 L987.30 507.88 L987.30 509.92 L989.50 512.40 L987.30 514.88 L987.30 516.91 L986.40 516.91 L986.10 516.24 Z" fill="#80abdc"/><path d="M990.30 512.40 L990.30 509.17 L990.60 508.60 L991.50 508.60 L991.50 510.31 L993.70 512.40 L991.50 514.49 L991.50 516.20 L990.60 516.20 L990.30 515.63 Z" fill="#80abdc"/><ellipse cx="982.30" cy="512.4" rx="1.3" ry="1.1" fill="#80abdc"/><path d="M1002.80 512.40 L1002.80 509.37 L1003.10 508.83 L1004.00 508.83 L1004.00 510.44 L1006.20 512.40 L1004.00 514.36 L1004.00 515.97 L1003.10 515.97 L1002.80 515.43 Z" fill="#80abdc"/><path d="M1007.00 512.40 L1007.00 508.69 L1007.30 508.03 L1008.20 508.03 L1008.20 510.00 L1010.40 512.40 L1008.20 514.80 L1008.20 516.77 L1007.30 516.77 L1007.00 516.11 Z" fill="#80abdc"/><ellipse cx="999.00" cy="512.4" rx="1.3" ry="1.1" fill="#80abdc"/><rect x="478" y="536.6999999999999" width="266.9" height="1.4" fill="#eef5fc"/><rect x="744.9" y="536.6999999999999" width="267.19999999999993" height="1.4" fill="#6f9cd2"/><path d="M485.10 537.40 L485.10 534.10 L485.40 533.51 L486.30 533.51 L486.30 535.26 L488.50 537.40 L486.30 539.54 L486.30 541.28 L485.40 541.28 L485.10 540.70 Z" fill="#eef5fc"/><path d="M489.30 537.40 L489.30 534.65 L489.60 534.17 L490.50 534.17 L490.50 535.62 L492.70 537.40 L490.50 539.18 L490.50 540.63 L489.60 540.63 L489.30 540.15 Z" fill="#eef5fc"/><ellipse cx="481.30" cy="537.4" rx="1.3" ry="1.1" fill="#eef5fc"/><path d="M501.80 537.40 L501.80 533.56 L502.10 532.88 L503.00 532.88 L503.00 534.92 L505.20 537.40 L503.00 539.88 L503.00 541.91 L502.10 541.91 L501.80 541.24 Z" fill="#eef5fc"/><path d="M506.00 537.40 L506.00 534.17 L506.30 533.60 L507.20 533.60 L507.20 535.31 L509.40 537.40 L507.20 539.49 L507.20 541.20 L506.30 541.20 L506.00 540.63 Z" fill="#eef5fc"/><ellipse cx="498.00" cy="537.4" rx="1.3" ry="1.1" fill="#eef5fc"/><path d="M518.50 537.40 L518.50 534.37 L518.80 533.83 L519.70 533.83 L519.70 535.44 L521.90 537.40 L519.70 539.36 L519.70 540.97 L518.80 540.97 L518.50 540.43 Z" fill="#eef5fc"/><path d="M522.70 537.40 L522.70 533.69 L523.00 533.03 L523.90 533.03 L523.90 535.00 L526.10 537.40 L523.90 539.80 L523.90 541.77 L523.00 541.77 L522.70 541.11 Z" fill="#eef5fc"/><ellipse cx="514.70" cy="537.4" rx="1.3" ry="1.1" fill="#eef5fc"/><path d="M535.20 537.40 L535.20 533.83 L535.50 533.20 L536.40 533.20 L536.40 535.09 L538.60 537.40 L536.40 539.71 L536.40 541.60 L535.50 541.60 L535.20 540.97 Z" fill="#eef5fc"/><path d="M539.40 537.40 L539.40 534.41 L539.70 533.88 L540.60 533.88 L540.60 535.47 L542.80 537.40 L540.60 539.33 L540.60 540.91 L539.70 540.91 L539.40 540.39 Z" fill="#eef5fc"/><ellipse cx="531.40" cy="537.4" rx="1.3" ry="1.1" fill="#eef5fc"/><path d="M551.90 537.40 L551.90 533.29 L552.20 532.57 L553.10 532.57 L553.10 534.74 L555.30 537.40 L553.10 540.06 L553.10 542.23 L552.20 542.23 L551.90 541.51 Z" fill="#eef5fc"/><path d="M556.10 537.40 L556.10 533.93 L556.40 533.31 L557.30 533.31 L557.30 535.15 L559.50 537.40 L557.30 539.65 L557.30 541.49 L556.40 541.49 L556.10 540.87 Z" fill="#eef5fc"/><ellipse cx="548.10" cy="537.4" rx="1.3" ry="1.1" fill="#eef5fc"/><path d="M568.60 537.40 L568.60 534.10 L568.90 533.51 L569.80 533.51 L569.80 535.26 L572.00 537.40 L569.80 539.54 L569.80 541.28 L568.90 541.28 L568.60 540.70 Z" fill="#eef5fc"/><path d="M572.80 537.40 L572.80 534.65 L573.10 534.17 L574.00 534.17 L574.00 535.62 L576.20 537.40 L574.00 539.18 L574.00 540.63 L573.10 540.63 L572.80 540.15 Z" fill="#eef5fc"/><ellipse cx="564.80" cy="537.4" rx="1.3" ry="1.1" fill="#eef5fc"/><path d="M585.30 537.40 L585.30 533.56 L585.60 532.88 L586.50 532.88 L586.50 534.92 L588.70 537.40 L586.50 539.88 L586.50 541.91 L585.60 541.91 L585.30 541.24 Z" fill="#eef5fc"/><path d="M589.50 537.40 L589.50 534.17 L589.80 533.60 L590.70 533.60 L590.70 535.31 L592.90 537.40 L590.70 539.49 L590.70 541.20 L589.80 541.20 L589.50 540.63 Z" fill="#eef5fc"/><ellipse cx="581.50" cy="537.4" rx="1.3" ry="1.1" fill="#eef5fc"/><path d="M602.00 537.40 L602.00 534.37 L602.30 533.83 L603.20 533.83 L603.20 535.44 L605.40 537.40 L603.20 539.36 L603.20 540.97 L602.30 540.97 L602.00 540.43 Z" fill="#eef5fc"/><path d="M606.20 537.40 L606.20 533.69 L606.50 533.03 L607.40 533.03 L607.40 535.00 L609.60 537.40 L607.40 539.80 L607.40 541.77 L606.50 541.77 L606.20 541.11 Z" fill="#eef5fc"/><ellipse cx="598.20" cy="537.4" rx="1.3" ry="1.1" fill="#eef5fc"/><path d="M618.70 537.40 L618.70 533.83 L619.00 533.20 L619.90 533.20 L619.90 535.09 L622.10 537.40 L619.90 539.71 L619.90 541.60 L619.00 541.60 L618.70 540.97 Z" fill="#eef5fc"/><path d="M622.90 537.40 L622.90 534.41 L623.20 533.88 L624.10 533.88 L624.10 535.47 L626.30 537.40 L624.10 539.33 L624.10 540.91 L623.20 540.91 L622.90 540.39 Z" fill="#eef5fc"/><ellipse cx="614.90" cy="537.4" rx="1.3" ry="1.1" fill="#eef5fc"/><path d="M635.40 537.40 L635.40 533.29 L635.70 532.57 L636.60 532.57 L636.60 534.74 L638.80 537.40 L636.60 540.06 L636.60 542.23 L635.70 542.23 L635.40 541.51 Z" fill="#eef5fc"/><path d="M639.60 537.40 L639.60 533.93 L639.90 533.31 L640.80 533.31 L640.80 535.15 L643.00 537.40 L640.80 539.65 L640.80 541.49 L639.90 541.49 L639.60 540.87 Z" fill="#eef5fc"/><ellipse cx="631.60" cy="537.4" rx="1.3" ry="1.1" fill="#eef5fc"/><path d="M652.10 537.40 L652.10 534.10 L652.40 533.51 L653.30 533.51 L653.30 535.26 L655.50 537.40 L653.30 539.54 L653.30 541.28 L652.40 541.28 L652.10 540.70 Z" fill="#eef5fc"/><path d="M656.30 537.40 L656.30 534.65 L656.60 534.17 L657.50 534.17 L657.50 535.62 L659.70 537.40 L657.50 539.18 L657.50 540.63 L656.60 540.63 L656.30 540.15 Z" fill="#eef5fc"/><ellipse cx="648.30" cy="537.4" rx="1.3" ry="1.1" fill="#eef5fc"/><path d="M668.80 537.40 L668.80 533.56 L669.10 532.88 L670.00 532.88 L670.00 534.92 L672.20 537.40 L670.00 539.88 L670.00 541.91 L669.10 541.91 L668.80 541.24 Z" fill="#eef5fc"/><path d="M673.00 537.40 L673.00 534.17 L673.30 533.60 L674.20 533.60 L674.20 535.31 L676.40 537.40 L674.20 539.49 L674.20 541.20 L673.30 541.20 L673.00 540.63 Z" fill="#eef5fc"/><ellipse cx="665.00" cy="537.4" rx="1.3" ry="1.1" fill="#eef5fc"/><path d="M685.50 537.40 L685.50 534.37 L685.80 533.83 L686.70 533.83 L686.70 535.44 L688.90 537.40 L686.70 539.36 L686.70 540.97 L685.80 540.97 L685.50 540.43 Z" fill="#eef5fc"/><path d="M689.70 537.40 L689.70 533.69 L690.00 533.03 L690.90 533.03 L690.90 535.00 L693.10 537.40 L690.90 539.80 L690.90 541.77 L690.00 541.77 L689.70 541.11 Z" fill="#eef5fc"/><ellipse cx="681.70" cy="537.4" rx="1.3" ry="1.1" fill="#eef5fc"/><path d="M702.20 537.40 L702.20 533.83 L702.50 533.20 L703.40 533.20 L703.40 535.09 L705.60 537.40 L703.40 539.71 L703.40 541.60 L702.50 541.60 L702.20 540.97 Z" fill="#eef5fc"/><path d="M706.40 537.40 L706.40 534.41 L706.70 533.88 L707.60 533.88 L707.60 535.47 L709.80 537.40 L707.60 539.33 L707.60 540.91 L706.70 540.91 L706.40 540.39 Z" fill="#eef5fc"/><ellipse cx="698.40" cy="537.4" rx="1.3" ry="1.1" fill="#eef5fc"/><path d="M718.90 537.40 L718.90 533.29 L719.20 532.57 L720.10 532.57 L720.10 534.74 L722.30 537.40 L720.10 540.06 L720.10 542.23 L719.20 542.23 L718.90 541.51 Z" fill="#eef5fc"/><path d="M723.10 537.40 L723.10 533.93 L723.40 533.31 L724.30 533.31 L724.30 535.15 L726.50 537.40 L724.30 539.65 L724.30 541.49 L723.40 541.49 L723.10 540.87 Z" fill="#eef5fc"/><ellipse cx="715.10" cy="537.4" rx="1.3" ry="1.1" fill="#eef5fc"/><path d="M735.60 537.40 L735.60 534.10 L735.90 533.51 L736.80 533.51 L736.80 535.26 L739.00 537.40 L736.80 539.54 L736.80 541.28 L735.90 541.28 L735.60 540.70 Z" fill="#eef5fc"/><path d="M739.80 537.40 L739.80 534.65 L740.10 534.17 L741.00 534.17 L741.00 535.62 L743.20 537.40 L741.00 539.18 L741.00 540.63 L740.10 540.63 L739.80 540.15 Z" fill="#eef5fc"/><ellipse cx="731.80" cy="537.4" rx="1.3" ry="1.1" fill="#eef5fc"/><path d="M752.30 537.40 L752.30 533.56 L752.60 532.88 L753.50 532.88 L753.50 534.92 L755.70 537.40 L753.50 539.88 L753.50 541.91 L752.60 541.91 L752.30 541.24 Z" fill="#80abdc"/><path d="M756.50 537.40 L756.50 534.17 L756.80 533.60 L757.70 533.60 L757.70 535.31 L759.90 537.40 L757.70 539.49 L757.70 541.20 L756.80 541.20 L756.50 540.63 Z" fill="#80abdc"/><ellipse cx="748.50" cy="537.4" rx="1.3" ry="1.1" fill="#80abdc"/><path d="M769.00 537.40 L769.00 534.37 L769.30 533.83 L770.20 533.83 L770.20 535.44 L772.40 537.40 L770.20 539.36 L770.20 540.97 L769.30 540.97 L769.00 540.43 Z" fill="#80abdc"/><path d="M773.20 537.40 L773.20 533.69 L773.50 533.03 L774.40 533.03 L774.40 535.00 L776.60 537.40 L774.40 539.80 L774.40 541.77 L773.50 541.77 L773.20 541.11 Z" fill="#80abdc"/><ellipse cx="765.20" cy="537.4" rx="1.3" ry="1.1" fill="#80abdc"/><path d="M785.70 537.40 L785.70 533.83 L786.00 533.20 L786.90 533.20 L786.90 535.09 L789.10 537.40 L786.90 539.71 L786.90 541.60 L786.00 541.60 L785.70 540.97 Z" fill="#80abdc"/><path d="M789.90 537.40 L789.90 534.41 L790.20 533.88 L791.10 533.88 L791.10 535.47 L793.30 537.40 L791.10 539.33 L791.10 540.91 L790.20 540.91 L789.90 540.39 Z" fill="#80abdc"/><ellipse cx="781.90" cy="537.4" rx="1.3" ry="1.1" fill="#80abdc"/><path d="M802.40 537.40 L802.40 533.29 L802.70 532.57 L803.60 532.57 L803.60 534.74 L805.80 537.40 L803.60 540.06 L803.60 542.23 L802.70 542.23 L802.40 541.51 Z" fill="#80abdc"/><path d="M806.60 537.40 L806.60 533.93 L806.90 533.31 L807.80 533.31 L807.80 535.15 L810.00 537.40 L807.80 539.65 L807.80 541.49 L806.90 541.49 L806.60 540.87 Z" fill="#80abdc"/><ellipse cx="798.60" cy="537.4" rx="1.3" ry="1.1" fill="#80abdc"/><path d="M819.10 537.40 L819.10 534.10 L819.40 533.51 L820.30 533.51 L820.30 535.26 L822.50 537.40 L820.30 539.54 L820.30 541.28 L819.40 541.28 L819.10 540.70 Z" fill="#80abdc"/><path d="M823.30 537.40 L823.30 534.65 L823.60 534.17 L824.50 534.17 L824.50 535.62 L826.70 537.40 L824.50 539.18 L824.50 540.63 L823.60 540.63 L823.30 540.15 Z" fill="#80abdc"/><ellipse cx="815.30" cy="537.4" rx="1.3" ry="1.1" fill="#80abdc"/><path d="M835.80 537.40 L835.80 533.56 L836.10 532.88 L837.00 532.88 L837.00 534.92 L839.20 537.40 L837.00 539.88 L837.00 541.91 L836.10 541.91 L835.80 541.24 Z" fill="#80abdc"/><path d="M840.00 537.40 L840.00 534.17 L840.30 533.60 L841.20 533.60 L841.20 535.31 L843.40 537.40 L841.20 539.49 L841.20 541.20 L840.30 541.20 L840.00 540.63 Z" fill="#80abdc"/><ellipse cx="832.00" cy="537.4" rx="1.3" ry="1.1" fill="#80abdc"/><path d="M852.50 537.40 L852.50 534.37 L852.80 533.83 L853.70 533.83 L853.70 535.44 L855.90 537.40 L853.70 539.36 L853.70 540.97 L852.80 540.97 L852.50 540.43 Z" fill="#80abdc"/><path d="M856.70 537.40 L856.70 533.69 L857.00 533.03 L857.90 533.03 L857.90 535.00 L860.10 537.40 L857.90 539.80 L857.90 541.77 L857.00 541.77 L856.70 541.11 Z" fill="#80abdc"/><ellipse cx="848.70" cy="537.4" rx="1.3" ry="1.1" fill="#80abdc"/><path d="M869.20 537.40 L869.20 533.83 L869.50 533.20 L870.40 533.20 L870.40 535.09 L872.60 537.40 L870.40 539.71 L870.40 541.60 L869.50 541.60 L869.20 540.97 Z" fill="#80abdc"/><path d="M873.40 537.40 L873.40 534.41 L873.70 533.88 L874.60 533.88 L874.60 535.47 L876.80 537.40 L874.60 539.33 L874.60 540.91 L873.70 540.91 L873.40 540.39 Z" fill="#80abdc"/><ellipse cx="865.40" cy="537.4" rx="1.3" ry="1.1" fill="#80abdc"/><path d="M885.90 537.40 L885.90 533.29 L886.20 532.57 L887.10 532.57 L887.10 534.74 L889.30 537.40 L887.10 540.06 L887.10 542.23 L886.20 542.23 L885.90 541.51 Z" fill="#80abdc"/><path d="M890.10 537.40 L890.10 533.93 L890.40 533.31 L891.30 533.31 L891.30 535.15 L893.50 537.40 L891.30 539.65 L891.30 541.49 L890.40 541.49 L890.10 540.87 Z" fill="#80abdc"/><ellipse cx="882.10" cy="537.4" rx="1.3" ry="1.1" fill="#80abdc"/><path d="M902.60 537.40 L902.60 534.10 L902.90 533.51 L903.80 533.51 L903.80 535.26 L906.00 537.40 L903.80 539.54 L903.80 541.28 L902.90 541.28 L902.60 540.70 Z" fill="#80abdc"/><path d="M906.80 537.40 L906.80 534.65 L907.10 534.17 L908.00 534.17 L908.00 535.62 L910.20 537.40 L908.00 539.18 L908.00 540.63 L907.10 540.63 L906.80 540.15 Z" fill="#80abdc"/><ellipse cx="898.80" cy="537.4" rx="1.3" ry="1.1" fill="#80abdc"/><path d="M919.30 537.40 L919.30 533.56 L919.60 532.88 L920.50 532.88 L920.50 534.92 L922.70 537.40 L920.50 539.88 L920.50 541.91 L919.60 541.91 L919.30 541.24 Z" fill="#80abdc"/><path d="M923.50 537.40 L923.50 534.17 L923.80 533.60 L924.70 533.60 L924.70 535.31 L926.90 537.40 L924.70 539.49 L924.70 541.20 L923.80 541.20 L923.50 540.63 Z" fill="#80abdc"/><ellipse cx="915.50" cy="537.4" rx="1.3" ry="1.1" fill="#80abdc"/><path d="M936.00 537.40 L936.00 534.37 L936.30 533.83 L937.20 533.83 L937.20 535.44 L939.40 537.40 L937.20 539.36 L937.20 540.97 L936.30 540.97 L936.00 540.43 Z" fill="#80abdc"/><path d="M940.20 537.40 L940.20 533.69 L940.50 533.03 L941.40 533.03 L941.40 535.00 L943.60 537.40 L941.40 539.80 L941.40 541.77 L940.50 541.77 L940.20 541.11 Z" fill="#80abdc"/><ellipse cx="932.20" cy="537.4" rx="1.3" ry="1.1" fill="#80abdc"/><path d="M952.70 537.40 L952.70 533.83 L953.00 533.20 L953.90 533.20 L953.90 535.09 L956.10 537.40 L953.90 539.71 L953.90 541.60 L953.00 541.60 L952.70 540.97 Z" fill="#80abdc"/><path d="M956.90 537.40 L956.90 534.41 L957.20 533.88 L958.10 533.88 L958.10 535.47 L960.30 537.40 L958.10 539.33 L958.10 540.91 L957.20 540.91 L956.90 540.39 Z" fill="#80abdc"/><ellipse cx="948.90" cy="537.4" rx="1.3" ry="1.1" fill="#80abdc"/><path d="M969.40 537.40 L969.40 533.29 L969.70 532.57 L970.60 532.57 L970.60 534.74 L972.80 537.40 L970.60 540.06 L970.60 542.23 L969.70 542.23 L969.40 541.51 Z" fill="#80abdc"/><path d="M973.60 537.40 L973.60 533.93 L973.90 533.31 L974.80 533.31 L974.80 535.15 L977.00 537.40 L974.80 539.65 L974.80 541.49 L973.90 541.49 L973.60 540.87 Z" fill="#80abdc"/><ellipse cx="965.60" cy="537.4" rx="1.3" ry="1.1" fill="#80abdc"/><path d="M986.10 537.40 L986.10 534.10 L986.40 533.51 L987.30 533.51 L987.30 535.26 L989.50 537.40 L987.30 539.54 L987.30 541.28 L986.40 541.28 L986.10 540.70 Z" fill="#80abdc"/><path d="M990.30 537.40 L990.30 534.65 L990.60 534.17 L991.50 534.17 L991.50 535.62 L993.70 537.40 L991.50 539.18 L991.50 540.63 L990.60 540.63 L990.30 540.15 Z" fill="#80abdc"/><ellipse cx="982.30" cy="537.4" rx="1.3" ry="1.1" fill="#80abdc"/><path d="M1002.80 537.40 L1002.80 533.56 L1003.10 532.88 L1004.00 532.88 L1004.00 534.92 L1006.20 537.40 L1004.00 539.88 L1004.00 541.91 L1003.10 541.91 L1002.80 541.24 Z" fill="#80abdc"/><path d="M1007.00 537.40 L1007.00 534.17 L1007.30 533.60 L1008.20 533.60 L1008.20 535.31 L1010.40 537.40 L1008.20 539.49 L1008.20 541.20 L1007.30 541.20 L1007.00 540.63 Z" fill="#80abdc"/><ellipse cx="999.00" cy="537.4" rx="1.3" ry="1.1" fill="#80abdc"/><rect x="478" y="577.25" width="266.9" height="1.3" fill="#a9c6e6"/><rect x="744.9" y="577.25" width="267.19999999999993" height="1.3" fill="#6f9cd2"/><path d="M480.20 577.90 Q482.40 577.36 483.28 576.01 Q484.60 575.06 486.10 576.01 Q487.60 577.36 490.60 577.90 Q487.60 578.44 486.10 579.79 Q484.60 580.74 483.28 579.79 Q482.40 578.44 480.20 577.90 Z" fill="#eef5fc"/><rect x="481.54" y="575.28" width="0.8" height="5.23" fill="#eef5fc"/><rect x="484.82" y="575.19" width="0.8" height="5.41" fill="#eef5fc"/><rect x="488.23" y="576.00" width="0.8" height="3.80" fill="#eef5fc"/><path d="M496.70 577.90 Q498.35 577.36 499.01 576.01 Q500.00 575.06 501.80 576.01 Q503.60 577.36 507.20 577.90 Q503.60 578.44 501.80 579.79 Q500.00 580.74 499.01 579.79 Q498.35 578.44 496.70 577.90 Z" fill="#eef5fc"/><rect x="497.31" y="574.84" width="0.8" height="6.11" fill="#eef5fc"/><rect x="500.71" y="575.75" width="0.8" height="4.30" fill="#eef5fc"/><rect x="504.60" y="575.39" width="0.8" height="5.01" fill="#eef5fc"/><path d="M509.42 577.90 Q510.96 577.61 511.58 576.89 Q512.50 576.39 513.34 576.89 Q514.18 577.61 515.86 577.90 Q514.18 578.19 513.34 578.91 Q512.50 579.41 511.58 578.91 Q510.96 578.19 509.42 577.90 Z" fill="#eef5fc"/><rect x="510.76" y="576.56" width="0.8" height="2.68" fill="#eef5fc"/><rect x="512.52" y="576.82" width="0.8" height="2.16" fill="#eef5fc"/><rect x="514.47" y="576.25" width="0.8" height="3.31" fill="#eef5fc"/><path d="M519.14 577.90 Q520.57 577.61 521.14 576.89 Q522.00 576.39 522.84 576.89 Q523.68 577.61 525.36 577.90 Q523.68 578.19 522.84 578.91 Q522.00 579.41 521.14 578.91 Q520.57 578.19 519.14 577.90 Z" fill="#eef5fc"/><rect x="520.06" y="576.35" width="0.8" height="3.11" fill="#eef5fc"/><rect x="522.10" y="576.89" width="0.8" height="2.02" fill="#eef5fc"/><rect x="524.08" y="576.47" width="0.8" height="2.87" fill="#eef5fc"/><path d="M530.55 577.90 Q532.48 577.27 533.25 575.69 Q534.40 574.59 536.65 575.69 Q538.90 577.27 543.40 577.90 Q538.90 578.53 536.65 580.11 Q534.40 581.21 533.25 580.11 Q532.48 578.53 530.55 577.90 Z" fill="#eef5fc"/><rect x="531.70" y="575.75" width="0.8" height="4.31" fill="#eef5fc"/><rect x="536.12" y="574.97" width="0.8" height="5.85" fill="#eef5fc"/><rect x="539.82" y="574.26" width="0.8" height="7.28" fill="#eef5fc"/><path d="M542.85 577.90 Q546.42 577.25 547.86 575.63 Q550.00 574.50 551.80 575.63 Q553.60 577.25 557.20 577.90 Q553.60 578.55 551.80 580.17 Q550.00 581.30 547.86 580.17 Q546.42 578.55 542.85 577.90 Z" fill="#eef5fc"/><rect x="545.91" y="574.08" width="0.8" height="7.64" fill="#eef5fc"/><rect x="549.97" y="574.30" width="0.8" height="7.20" fill="#eef5fc"/><rect x="554.39" y="574.06" width="0.8" height="7.69" fill="#eef5fc"/><path d="M564.40 577.90 Q566.05 577.68 566.71 577.14 Q567.70 576.77 568.60 577.14 Q569.50 577.68 571.30 577.90 Q569.50 578.12 568.60 578.66 Q567.70 579.03 566.71 578.66 Q566.05 578.12 564.40 577.90 Z" fill="#eef5fc"/><rect x="565.88" y="577.12" width="0.8" height="1.56" fill="#eef5fc"/><rect x="567.24" y="577.05" width="0.8" height="1.70" fill="#eef5fc"/><rect x="570.17" y="576.92" width="0.8" height="1.96" fill="#eef5fc"/><path d="M576.75 577.90 Q578.12 577.40 578.67 576.14 Q579.50 575.25 580.55 576.14 Q581.60 577.40 583.70 577.90 Q581.60 578.40 580.55 579.66 Q579.50 580.55 578.67 579.66 Q578.12 578.40 576.75 577.90 Z" fill="#eef5fc"/><rect x="577.73" y="575.80" width="0.8" height="4.20" fill="#eef5fc"/><rect x="579.71" y="575.68" width="0.8" height="4.44" fill="#eef5fc"/><rect x="581.65" y="575.40" width="0.8" height="5.00" fill="#eef5fc"/><path d="M585.25 577.90 Q586.62 577.40 587.17 576.14 Q588.00 575.25 589.20 576.14 Q590.40 577.40 592.80 577.90 Q590.40 578.40 589.20 579.66 Q588.00 580.55 587.17 579.66 Q586.62 578.40 585.25 577.90 Z" fill="#eef5fc"/><rect x="586.18" y="574.95" width="0.8" height="5.89" fill="#eef5fc"/><rect x="588.56" y="574.92" width="0.8" height="5.96" fill="#eef5fc"/><rect x="591.01" y="574.83" width="0.8" height="6.13" fill="#eef5fc"/><path d="M597.20 577.90 Q598.85 577.32 599.51 575.88 Q600.50 574.88 601.40 575.88 Q602.30 577.32 604.10 577.90 Q602.30 578.48 601.40 579.92 Q600.50 580.92 599.51 579.92 Q598.85 578.48 597.20 577.90 Z" fill="#eef5fc"/><rect x="598.47" y="575.72" width="0.8" height="4.36" fill="#eef5fc"/><rect x="600.76" y="574.44" width="0.8" height="6.93" fill="#eef5fc"/><rect x="602.90" y="575.07" width="0.8" height="5.66" fill="#eef5fc"/><path d="M608.70 577.90 Q610.35 577.76 611.01 577.40 Q612.00 577.14 612.90 577.40 Q613.80 577.76 615.60 577.90 Q613.80 578.04 612.90 578.40 Q612.00 578.66 611.01 578.40 Q610.35 578.04 608.70 577.90 Z" fill="#eef5fc"/><rect x="610.01" y="577.34" width="0.8" height="1.13" fill="#eef5fc"/><rect x="612.23" y="577.19" width="0.8" height="1.42" fill="#eef5fc"/><rect x="613.78" y="577.39" width="0.8" height="1.01" fill="#eef5fc"/><path d="M631.30 577.90 Q632.40 577.76 632.84 577.40 Q633.50 577.14 634.10 577.40 Q634.70 577.76 635.90 577.90 Q634.70 578.04 634.10 578.40 Q633.50 578.66 632.84 578.40 Q632.40 578.04 631.30 577.90 Z" fill="#eef5fc"/><rect x="632.25" y="577.02" width="0.8" height="1.75" fill="#eef5fc"/><rect x="632.89" y="577.10" width="0.8" height="1.60" fill="#eef5fc"/><rect x="634.61" y="577.36" width="0.8" height="1.08" fill="#eef5fc"/><path d="M643.35 577.90 Q644.17 577.76 644.50 577.40 Q645.00 577.14 645.45 577.40 Q645.90 577.76 646.80 577.90 Q645.90 578.04 645.45 578.40 Q645.00 578.66 644.50 578.40 Q644.17 578.04 643.35 577.90 Z" fill="#eef5fc"/><rect x="643.49" y="577.11" width="0.8" height="1.58" fill="#eef5fc"/><rect x="645.12" y="577.40" width="0.8" height="1.00" fill="#eef5fc"/><rect x="645.91" y="577.40" width="0.8" height="1.00" fill="#eef5fc"/><path d="M651.08 577.90 Q651.74 577.77 652.00 577.46 Q652.40 577.24 652.76 577.46 Q653.12 577.77 653.84 577.90 Q653.12 578.03 652.76 578.34 Q652.40 578.56 652.00 578.34 Q651.74 578.03 651.08 577.90 Z" fill="#eef5fc"/><rect x="651.50" y="577.36" width="0.8" height="1.07" fill="#eef5fc"/><rect x="652.50" y="577.14" width="0.8" height="1.53" fill="#eef5fc"/><rect x="652.97" y="577.13" width="0.8" height="1.54" fill="#eef5fc"/><path d="M664.35 577.90 Q666.28 577.47 667.05 576.39 Q668.20 575.63 669.40 576.39 Q670.60 577.47 673.00 577.90 Q670.60 578.33 669.40 579.41 Q668.20 580.17 667.05 579.41 Q666.28 578.33 664.35 577.90 Z" fill="#eef5fc"/><rect x="665.51" y="576.37" width="0.8" height="3.06" fill="#eef5fc"/><rect x="668.42" y="576.42" width="0.8" height="2.96" fill="#eef5fc"/><rect x="670.65" y="575.97" width="0.8" height="3.86" fill="#eef5fc"/><path d="M677.50 577.90 Q680.25 577.38 681.35 576.07 Q683.00 575.16 684.80 576.07 Q686.60 577.38 690.20 577.90 Q686.60 578.42 684.80 579.73 Q683.00 580.64 681.35 579.73 Q680.25 578.42 677.50 577.90 Z" fill="#eef5fc"/><rect x="679.71" y="575.93" width="0.8" height="3.93" fill="#eef5fc"/><rect x="682.99" y="574.90" width="0.8" height="6.00" fill="#eef5fc"/><rect x="687.11" y="574.77" width="0.8" height="6.26" fill="#eef5fc"/><path d="M697.25 577.90 Q698.62 577.72 699.17 577.27 Q700.00 576.95 700.75 577.27 Q701.50 577.72 703.00 577.90 Q701.50 578.08 700.75 578.53 Q700.00 578.85 699.17 578.53 Q698.62 578.08 697.25 577.90 Z" fill="#eef5fc"/><rect x="698.50" y="577.11" width="0.8" height="1.58" fill="#eef5fc"/><rect x="699.81" y="577.04" width="0.8" height="1.72" fill="#eef5fc"/><rect x="701.74" y="577.00" width="0.8" height="1.80" fill="#eef5fc"/><path d="M711.70 577.90 Q713.35 577.65 714.01 577.02 Q715.00 576.58 715.90 577.02 Q716.80 577.65 718.60 577.90 Q716.80 578.15 715.90 578.78 Q715.00 579.22 714.01 578.78 Q713.35 578.15 711.70 577.90 Z" fill="#eef5fc"/><rect x="712.86" y="576.63" width="0.8" height="2.55" fill="#eef5fc"/><rect x="715.34" y="576.71" width="0.8" height="2.39" fill="#eef5fc"/><rect x="716.93" y="576.56" width="0.8" height="2.69" fill="#eef5fc"/><path d="M719.70 577.90 Q721.35 577.67 722.01 577.08 Q723.00 576.67 723.90 577.08 Q724.80 577.67 726.60 577.90 Q724.80 578.13 723.90 578.72 Q723.00 579.13 722.01 578.72 Q721.35 578.13 719.70 577.90 Z" fill="#eef5fc"/><rect x="720.54" y="576.92" width="0.8" height="1.95" fill="#eef5fc"/><rect x="723.38" y="576.78" width="0.8" height="2.24" fill="#eef5fc"/><rect x="725.05" y="577.11" width="0.8" height="1.57" fill="#eef5fc"/><path d="M732.05 577.90 Q733.42 577.40 733.97 576.14 Q734.80 575.25 735.85 576.14 Q736.90 577.40 739.00 577.90 Q736.90 578.40 735.85 579.66 Q734.80 580.55 733.97 579.66 Q733.42 578.40 732.05 577.90 Z" fill="#eef5fc"/><rect x="732.82" y="575.41" width="0.8" height="4.98" fill="#eef5fc"/><rect x="734.52" y="575.36" width="0.8" height="5.08" fill="#eef5fc"/><rect x="737.23" y="576.14" width="0.8" height="3.53" fill="#eef5fc"/><path d="M742.68 577.90 Q743.34 577.74 743.60 577.33 Q744.00 577.05 744.36 577.33 Q744.72 577.74 745.44 577.90 Q744.72 578.06 744.36 578.47 Q744.00 578.75 743.60 578.47 Q743.34 578.06 742.68 577.90 Z" fill="#eef5fc"/><rect x="743.01" y="577.15" width="0.8" height="1.50" fill="#eef5fc"/><rect x="743.90" y="577.20" width="0.8" height="1.40" fill="#eef5fc"/><rect x="744.77" y="577.03" width="0.8" height="1.74" fill="#eef5fc"/><path d="M747.40 577.90 Q749.60 577.36 750.48 576.01 Q751.80 575.06 753.30 576.01 Q754.80 577.36 757.80 577.90 Q754.80 578.44 753.30 579.79 Q751.80 580.74 750.48 579.79 Q749.60 578.44 747.40 577.90 Z" fill="#80abdc"/><rect x="748.52" y="576.01" width="0.8" height="3.78" fill="#80abdc"/><rect x="752.33" y="574.66" width="0.8" height="6.49" fill="#80abdc"/><rect x="755.05" y="575.42" width="0.8" height="4.97" fill="#80abdc"/><path d="M763.90 577.90 Q765.55 577.36 766.21 576.01 Q767.20 575.06 769.00 576.01 Q770.80 577.36 774.40 577.90 Q770.80 578.44 769.00 579.79 Q767.20 580.74 766.21 579.79 Q765.55 578.44 763.90 577.90 Z" fill="#80abdc"/><rect x="765.09" y="575.62" width="0.8" height="4.56" fill="#80abdc"/><rect x="768.01" y="575.63" width="0.8" height="4.54" fill="#80abdc"/><rect x="771.17" y="575.21" width="0.8" height="5.39" fill="#80abdc"/><path d="M776.62 577.90 Q778.16 577.61 778.78 576.89 Q779.70 576.39 780.54 576.89 Q781.38 577.61 783.06 577.90 Q781.38 578.19 780.54 578.91 Q779.70 579.41 778.78 578.91 Q778.16 578.19 776.62 577.90 Z" fill="#80abdc"/><rect x="777.42" y="576.64" width="0.8" height="2.52" fill="#80abdc"/><rect x="779.85" y="576.92" width="0.8" height="1.96" fill="#80abdc"/><rect x="781.61" y="576.35" width="0.8" height="3.10" fill="#80abdc"/><path d="M786.34 577.90 Q787.77 577.61 788.34 576.89 Q789.20 576.39 790.04 576.89 Q790.88 577.61 792.56 577.90 Q790.88 578.19 790.04 578.91 Q789.20 579.41 788.34 578.91 Q787.77 578.19 786.34 577.90 Z" fill="#80abdc"/><rect x="787.05" y="576.76" width="0.8" height="2.28" fill="#80abdc"/><rect x="789.43" y="576.75" width="0.8" height="2.30" fill="#80abdc"/><rect x="790.71" y="576.59" width="0.8" height="2.62" fill="#80abdc"/><path d="M797.75 577.90 Q799.67 577.27 800.44 575.69 Q801.60 574.59 803.85 575.69 Q806.10 577.27 810.60 577.90 Q806.10 578.53 803.85 580.11 Q801.60 581.21 800.44 580.11 Q799.67 578.53 797.75 577.90 Z" fill="#80abdc"/><rect x="799.30" y="575.62" width="0.8" height="4.56" fill="#80abdc"/><rect x="802.77" y="575.22" width="0.8" height="5.37" fill="#80abdc"/><rect x="807.13" y="575.03" width="0.8" height="5.73" fill="#80abdc"/><path d="M810.05 577.90 Q813.62 577.25 815.06 575.63 Q817.20 574.50 819.00 575.63 Q820.80 577.25 824.40 577.90 Q820.80 578.55 819.00 580.17 Q817.20 581.30 815.06 580.17 Q813.62 578.55 810.05 577.90 Z" fill="#80abdc"/><rect x="813.26" y="575.44" width="0.8" height="4.93" fill="#80abdc"/><rect x="817.11" y="574.57" width="0.8" height="6.66" fill="#80abdc"/><rect x="822.03" y="574.93" width="0.8" height="5.94" fill="#80abdc"/><path d="M831.60 577.90 Q833.25 577.68 833.91 577.14 Q834.90 576.77 835.80 577.14 Q836.70 577.68 838.50 577.90 Q836.70 578.12 835.80 578.66 Q834.90 579.03 833.91 578.66 Q833.25 578.12 831.60 577.90 Z" fill="#80abdc"/><rect x="832.43" y="577.11" width="0.8" height="1.59" fill="#80abdc"/><rect x="834.83" y="577.07" width="0.8" height="1.67" fill="#80abdc"/><rect x="837.21" y="576.68" width="0.8" height="2.45" fill="#80abdc"/><path d="M843.95 577.90 Q845.33 577.40 845.88 576.14 Q846.70 575.25 847.75 576.14 Q848.80 577.40 850.90 577.90 Q848.80 578.40 847.75 579.66 Q846.70 580.55 845.88 579.66 Q845.33 578.40 843.95 577.90 Z" fill="#80abdc"/><rect x="844.48" y="575.83" width="0.8" height="4.14" fill="#80abdc"/><rect x="847.21" y="575.32" width="0.8" height="5.16" fill="#80abdc"/><rect x="849.31" y="575.74" width="0.8" height="4.33" fill="#80abdc"/><path d="M852.45 577.90 Q853.83 577.40 854.38 576.14 Q855.20 575.25 856.40 576.14 Q857.60 577.40 860.00 577.90 Q857.60 578.40 856.40 579.66 Q855.20 580.55 854.38 579.66 Q853.83 578.40 852.45 577.90 Z" fill="#80abdc"/><rect x="852.93" y="575.81" width="0.8" height="4.18" fill="#80abdc"/><rect x="855.87" y="575.84" width="0.8" height="4.12" fill="#80abdc"/><rect x="857.70" y="575.64" width="0.8" height="4.53" fill="#80abdc"/><path d="M864.40 577.90 Q866.05 577.32 866.71 575.88 Q867.70 574.88 868.60 575.88 Q869.50 577.32 871.30 577.90 Q869.50 578.48 868.60 579.92 Q867.70 580.92 866.71 579.92 Q866.05 578.48 864.40 577.90 Z" fill="#80abdc"/><rect x="865.42" y="575.32" width="0.8" height="5.15" fill="#80abdc"/><rect x="868.02" y="575.73" width="0.8" height="4.34" fill="#80abdc"/><rect x="869.20" y="574.47" width="0.8" height="6.86" fill="#80abdc"/><path d="M875.90 577.90 Q877.55 577.76 878.21 577.40 Q879.20 577.14 880.10 577.40 Q881.00 577.76 882.80 577.90 Q881.00 578.04 880.10 578.40 Q879.20 578.66 878.21 578.40 Q877.55 578.04 875.90 577.90 Z" fill="#80abdc"/><rect x="877.38" y="577.03" width="0.8" height="1.75" fill="#80abdc"/><rect x="879.03" y="577.04" width="0.8" height="1.72" fill="#80abdc"/><rect x="881.63" y="577.33" width="0.8" height="1.14" fill="#80abdc"/><path d="M898.50 577.90 Q899.60 577.76 900.04 577.40 Q900.70 577.14 901.30 577.40 Q901.90 577.76 903.10 577.90 Q901.90 578.04 901.30 578.40 Q900.70 578.66 900.04 578.40 Q899.60 578.04 898.50 577.90 Z" fill="#80abdc"/><rect x="899.35" y="577.09" width="0.8" height="1.63" fill="#80abdc"/><rect x="900.66" y="577.21" width="0.8" height="1.38" fill="#80abdc"/><rect x="901.69" y="577.28" width="0.8" height="1.23" fill="#80abdc"/><path d="M910.55 577.90 Q911.38 577.76 911.71 577.40 Q912.20 577.14 912.65 577.40 Q913.10 577.76 914.00 577.90 Q913.10 578.04 912.65 578.40 Q912.20 578.66 911.71 578.40 Q911.38 578.04 910.55 577.90 Z" fill="#80abdc"/><rect x="910.63" y="577.39" width="0.8" height="1.01" fill="#80abdc"/><rect x="912.04" y="577.31" width="0.8" height="1.19" fill="#80abdc"/><rect x="913.31" y="577.40" width="0.8" height="1.00" fill="#80abdc"/><path d="M918.28 577.90 Q918.94 577.77 919.20 577.46 Q919.60 577.24 919.96 577.46 Q920.32 577.77 921.04 577.90 Q920.32 578.03 919.96 578.34 Q919.60 578.56 919.20 578.34 Q918.94 578.03 918.28 577.90 Z" fill="#80abdc"/><rect x="918.88" y="577.24" width="0.8" height="1.33" fill="#80abdc"/><rect x="919.74" y="577.17" width="0.8" height="1.47" fill="#80abdc"/><rect x="920.56" y="577.28" width="0.8" height="1.24" fill="#80abdc"/><path d="M931.55 577.90 Q933.48 577.47 934.25 576.39 Q935.40 575.63 936.60 576.39 Q937.80 577.47 940.20 577.90 Q937.80 578.33 936.60 579.41 Q935.40 580.17 934.25 579.41 Q933.48 578.33 931.55 577.90 Z" fill="#80abdc"/><rect x="932.41" y="575.57" width="0.8" height="4.67" fill="#80abdc"/><rect x="935.20" y="576.10" width="0.8" height="3.60" fill="#80abdc"/><rect x="938.31" y="575.83" width="0.8" height="4.14" fill="#80abdc"/><path d="M944.70 577.90 Q947.45 577.38 948.55 576.07 Q950.20 575.16 952.00 576.07 Q953.80 577.38 957.40 577.90 Q953.80 578.42 952.00 579.73 Q950.20 580.64 948.55 579.73 Q947.45 578.42 944.70 577.90 Z" fill="#80abdc"/><rect x="946.71" y="574.80" width="0.8" height="6.20" fill="#80abdc"/><rect x="950.76" y="575.67" width="0.8" height="4.47" fill="#80abdc"/><rect x="954.25" y="574.91" width="0.8" height="5.98" fill="#80abdc"/><path d="M964.45 577.90 Q965.83 577.72 966.38 577.27 Q967.20 576.95 967.95 577.27 Q968.70 577.72 970.20 577.90 Q968.70 578.08 967.95 578.53 Q967.20 578.85 966.38 578.53 Q965.83 578.08 964.45 577.90 Z" fill="#80abdc"/><rect x="965.28" y="576.91" width="0.8" height="1.98" fill="#80abdc"/><rect x="966.90" y="577.20" width="0.8" height="1.40" fill="#80abdc"/><rect x="968.83" y="576.89" width="0.8" height="2.02" fill="#80abdc"/><path d="M978.90 577.90 Q980.55 577.65 981.21 577.02 Q982.20 576.58 983.10 577.02 Q984.00 577.65 985.80 577.90 Q984.00 578.15 983.10 578.78 Q982.20 579.22 981.21 578.78 Q980.55 578.15 978.90 577.90 Z" fill="#80abdc"/><rect x="979.67" y="576.51" width="0.8" height="2.79" fill="#80abdc"/><rect x="982.52" y="576.50" width="0.8" height="2.81" fill="#80abdc"/><rect x="984.52" y="577.05" width="0.8" height="1.69" fill="#80abdc"/><path d="M986.90 577.90 Q988.55 577.67 989.21 577.08 Q990.20 576.67 991.10 577.08 Q992.00 577.67 993.80 577.90 Q992.00 578.13 991.10 578.72 Q990.20 579.13 989.21 578.72 Q988.55 578.13 986.90 577.90 Z" fill="#80abdc"/><rect x="988.13" y="576.56" width="0.8" height="2.68" fill="#80abdc"/><rect x="989.65" y="576.94" width="0.8" height="1.91" fill="#80abdc"/><rect x="991.97" y="576.78" width="0.8" height="2.25" fill="#80abdc"/><path d="M999.25 577.90 Q1000.62 577.40 1001.17 576.14 Q1002.00 575.25 1003.05 576.14 Q1004.10 577.40 1006.20 577.90 Q1004.10 578.40 1003.05 579.66 Q1002.00 580.55 1001.17 579.66 Q1000.62 578.40 999.25 577.90 Z" fill="#80abdc"/><rect x="1000.02" y="575.56" width="0.8" height="4.68" fill="#80abdc"/><rect x="1002.48" y="576.22" width="0.8" height="3.37" fill="#80abdc"/><rect x="1003.85" y="576.04" width="0.8" height="3.72" fill="#80abdc"/><rect x="478" y="602.15" width="266.9" height="1.3" fill="#a9c6e6"/><rect x="744.9" y="602.15" width="267.19999999999993" height="1.3" fill="#6f9cd2"/><path d="M480.20 602.80 Q482.40 602.31 483.28 601.10 Q484.60 600.25 486.10 601.10 Q487.60 602.31 490.60 602.80 Q487.60 603.29 486.10 604.50 Q484.60 605.35 483.28 604.50 Q482.40 603.29 480.20 602.80 Z" fill="#eef5fc"/><rect x="481.42" y="601.09" width="0.8" height="3.42" fill="#eef5fc"/><rect x="485.42" y="600.03" width="0.8" height="5.55" fill="#eef5fc"/><rect x="487.69" y="600.50" width="0.8" height="4.60" fill="#eef5fc"/><path d="M496.70 602.80 Q498.35 602.31 499.01 601.10 Q500.00 600.25 501.80 601.10 Q503.60 602.31 507.20 602.80 Q503.60 603.29 501.80 604.50 Q500.00 605.35 499.01 604.50 Q498.35 603.29 496.70 602.80 Z" fill="#eef5fc"/><rect x="497.62" y="600.76" width="0.8" height="4.09" fill="#eef5fc"/><rect x="500.80" y="600.31" width="0.8" height="4.99" fill="#eef5fc"/><rect x="504.19" y="600.69" width="0.8" height="4.21" fill="#eef5fc"/><path d="M509.42 602.80 Q510.96 602.54 511.58 601.89 Q512.50 601.44 513.34 601.89 Q514.18 602.54 515.86 602.80 Q514.18 603.06 513.34 603.71 Q512.50 604.16 511.58 603.71 Q510.96 603.06 509.42 602.80 Z" fill="#eef5fc"/><rect x="510.11" y="601.70" width="0.8" height="2.20" fill="#eef5fc"/><rect x="512.00" y="601.54" width="0.8" height="2.53" fill="#eef5fc"/><rect x="514.56" y="601.66" width="0.8" height="2.28" fill="#eef5fc"/><path d="M519.14 602.80 Q520.57 602.54 521.14 601.89 Q522.00 601.44 522.84 601.89 Q523.68 602.54 525.36 602.80 Q523.68 603.06 522.84 603.71 Q522.00 604.16 521.14 603.71 Q520.57 603.06 519.14 602.80 Z" fill="#eef5fc"/><rect x="519.62" y="601.81" width="0.8" height="1.99" fill="#eef5fc"/><rect x="521.80" y="601.50" width="0.8" height="2.60" fill="#eef5fc"/><rect x="524.10" y="601.66" width="0.8" height="2.28" fill="#eef5fc"/><path d="M530.55 602.80 Q532.48 602.23 533.25 600.82 Q534.40 599.82 536.65 600.82 Q538.90 602.23 543.40 602.80 Q538.90 603.37 536.65 604.78 Q534.40 605.78 533.25 604.78 Q532.48 603.37 530.55 602.80 Z" fill="#eef5fc"/><rect x="532.20" y="599.93" width="0.8" height="5.74" fill="#eef5fc"/><rect x="535.68" y="600.32" width="0.8" height="4.95" fill="#eef5fc"/><rect x="539.60" y="599.80" width="0.8" height="5.99" fill="#eef5fc"/><path d="M542.85 602.80 Q546.42 602.22 547.86 600.76 Q550.00 599.74 551.80 600.76 Q553.60 602.22 557.20 602.80 Q553.60 603.38 551.80 604.84 Q550.00 605.86 547.86 604.84 Q546.42 603.38 542.85 602.80 Z" fill="#eef5fc"/><rect x="545.62" y="599.73" width="0.8" height="6.14" fill="#eef5fc"/><rect x="550.04" y="600.46" width="0.8" height="4.68" fill="#eef5fc"/><rect x="554.49" y="599.73" width="0.8" height="6.14" fill="#eef5fc"/><path d="M564.40 602.80 Q566.05 602.61 566.71 602.12 Q567.70 601.78 568.60 602.12 Q569.50 602.61 571.30 602.80 Q569.50 602.99 568.60 603.48 Q567.70 603.82 566.71 603.48 Q566.05 602.99 564.40 602.80 Z" fill="#eef5fc"/><rect x="565.07" y="601.92" width="0.8" height="1.75" fill="#eef5fc"/><rect x="567.53" y="601.68" width="0.8" height="2.25" fill="#eef5fc"/><rect x="570.14" y="601.95" width="0.8" height="1.70" fill="#eef5fc"/><path d="M576.75 602.80 Q578.12 602.35 578.67 601.21 Q579.50 600.42 580.55 601.21 Q581.60 602.35 583.70 602.80 Q581.60 603.25 580.55 604.39 Q579.50 605.18 578.67 604.39 Q578.12 603.25 576.75 602.80 Z" fill="#eef5fc"/><rect x="578.00" y="600.29" width="0.8" height="5.02" fill="#eef5fc"/><rect x="579.46" y="600.70" width="0.8" height="4.19" fill="#eef5fc"/><rect x="581.42" y="600.26" width="0.8" height="5.07" fill="#eef5fc"/><path d="M585.25 602.80 Q586.62 602.35 587.17 601.21 Q588.00 600.42 589.20 601.21 Q590.40 602.35 592.80 602.80 Q590.40 603.25 589.20 604.39 Q588.00 605.18 587.17 604.39 Q586.62 603.25 585.25 602.80 Z" fill="#eef5fc"/><rect x="586.26" y="600.17" width="0.8" height="5.26" fill="#eef5fc"/><rect x="588.67" y="600.45" width="0.8" height="4.71" fill="#eef5fc"/><rect x="590.88" y="600.58" width="0.8" height="4.44" fill="#eef5fc"/><path d="M597.20 602.80 Q598.85 602.28 599.51 600.99 Q600.50 600.08 601.40 600.99 Q602.30 602.28 604.10 602.80 Q602.30 603.32 601.40 604.61 Q600.50 605.52 599.51 604.61 Q598.85 603.32 597.20 602.80 Z" fill="#eef5fc"/><rect x="597.90" y="600.23" width="0.8" height="5.15" fill="#eef5fc"/><rect x="599.90" y="600.87" width="0.8" height="3.87" fill="#eef5fc"/><rect x="602.77" y="601.01" width="0.8" height="3.58" fill="#eef5fc"/><path d="M608.70 602.80 Q610.35 602.67 611.01 602.35 Q612.00 602.12 612.90 602.35 Q613.80 602.67 615.60 602.80 Q613.80 602.93 612.90 603.25 Q612.00 603.48 611.01 603.25 Q610.35 602.93 608.70 602.80 Z" fill="#eef5fc"/><rect x="609.39" y="602.33" width="0.8" height="0.94" fill="#eef5fc"/><rect x="612.28" y="602.30" width="0.8" height="0.99" fill="#eef5fc"/><rect x="613.52" y="602.07" width="0.8" height="1.47" fill="#eef5fc"/><path d="M631.30 602.80 Q632.40 602.67 632.84 602.35 Q633.50 602.12 634.10 602.35 Q634.70 602.67 635.90 602.80 Q634.70 602.93 634.10 603.25 Q633.50 603.48 632.84 603.25 Q632.40 602.93 631.30 602.80 Z" fill="#eef5fc"/><rect x="631.52" y="602.06" width="0.8" height="1.47" fill="#eef5fc"/><rect x="633.47" y="602.07" width="0.8" height="1.47" fill="#eef5fc"/><rect x="635.15" y="602.16" width="0.8" height="1.28" fill="#eef5fc"/><path d="M643.35 602.80 Q644.17 602.67 644.50 602.35 Q645.00 602.12 645.45 602.35 Q645.90 602.67 646.80 602.80 Q645.90 602.93 645.45 603.25 Q645.00 603.48 644.50 603.25 Q644.17 602.93 643.35 602.80 Z" fill="#eef5fc"/><rect x="644.00" y="602.35" width="0.8" height="0.89" fill="#eef5fc"/><rect x="645.02" y="602.18" width="0.8" height="1.23" fill="#eef5fc"/><rect x="646.02" y="602.33" width="0.8" height="0.94" fill="#eef5fc"/><path d="M651.08 602.80 Q651.74 602.69 652.00 602.40 Q652.40 602.20 652.76 602.40 Q653.12 602.69 653.84 602.80 Q653.12 602.91 652.76 603.20 Q652.40 603.40 652.00 603.20 Q651.74 602.91 651.08 602.80 Z" fill="#eef5fc"/><rect x="651.53" y="602.13" width="0.8" height="1.34" fill="#eef5fc"/><rect x="651.68" y="602.32" width="0.8" height="0.96" fill="#eef5fc"/><rect x="653.02" y="602.16" width="0.8" height="1.28" fill="#eef5fc"/><path d="M664.35 602.80 Q666.28 602.41 667.05 601.44 Q668.20 600.76 669.40 601.44 Q670.60 602.41 673.00 602.80 Q670.60 603.19 669.40 604.16 Q668.20 604.84 667.05 604.16 Q666.28 603.19 664.35 602.80 Z" fill="#eef5fc"/><rect x="665.44" y="601.31" width="0.8" height="2.98" fill="#eef5fc"/><rect x="668.07" y="600.84" width="0.8" height="3.92" fill="#eef5fc"/><rect x="671.20" y="601.08" width="0.8" height="3.44" fill="#eef5fc"/><path d="M677.50 602.80 Q680.25 602.33 681.35 601.16 Q683.00 600.33 684.80 601.16 Q686.60 602.33 690.20 602.80 Q686.60 603.27 684.80 604.44 Q683.00 605.27 681.35 604.44 Q680.25 603.27 677.50 602.80 Z" fill="#eef5fc"/><rect x="679.47" y="600.72" width="0.8" height="4.17" fill="#eef5fc"/><rect x="683.30" y="600.69" width="0.8" height="4.22" fill="#eef5fc"/><rect x="686.88" y="600.58" width="0.8" height="4.44" fill="#eef5fc"/><path d="M697.25 602.80 Q698.62 602.64 699.17 602.23 Q700.00 601.95 700.75 602.23 Q701.50 602.64 703.00 602.80 Q701.50 602.96 700.75 603.37 Q700.00 603.65 699.17 603.37 Q698.62 602.96 697.25 602.80 Z" fill="#eef5fc"/><rect x="698.57" y="602.07" width="0.8" height="1.45" fill="#eef5fc"/><rect x="700.10" y="602.19" width="0.8" height="1.22" fill="#eef5fc"/><rect x="701.79" y="601.92" width="0.8" height="1.76" fill="#eef5fc"/><path d="M711.70 602.80 Q713.35 602.57 714.01 602.01 Q715.00 601.61 715.90 602.01 Q716.80 602.57 718.60 602.80 Q716.80 603.03 715.90 603.59 Q715.00 603.99 714.01 603.59 Q713.35 603.03 711.70 602.80 Z" fill="#eef5fc"/><rect x="712.97" y="601.72" width="0.8" height="2.16" fill="#eef5fc"/><rect x="714.88" y="601.64" width="0.8" height="2.32" fill="#eef5fc"/><rect x="717.40" y="601.95" width="0.8" height="1.70" fill="#eef5fc"/><path d="M719.70 602.80 Q721.35 602.59 722.01 602.06 Q723.00 601.69 723.90 602.06 Q724.80 602.59 726.60 602.80 Q724.80 603.01 723.90 603.54 Q723.00 603.91 722.01 603.54 Q721.35 603.01 719.70 602.80 Z" fill="#eef5fc"/><rect x="720.40" y="601.66" width="0.8" height="2.28" fill="#eef5fc"/><rect x="723.32" y="601.80" width="0.8" height="2.01" fill="#eef5fc"/><rect x="724.94" y="601.68" width="0.8" height="2.25" fill="#eef5fc"/><path d="M732.05 602.80 Q733.42 602.35 733.97 601.21 Q734.80 600.42 735.85 601.21 Q736.90 602.35 739.00 602.80 Q736.90 603.25 735.85 604.39 Q734.80 605.18 733.97 604.39 Q733.42 603.25 732.05 602.80 Z" fill="#eef5fc"/><rect x="732.59" y="600.95" width="0.8" height="3.70" fill="#eef5fc"/><rect x="734.70" y="600.55" width="0.8" height="4.50" fill="#eef5fc"/><rect x="736.91" y="601.00" width="0.8" height="3.61" fill="#eef5fc"/><path d="M742.68 602.80 Q743.34 602.65 743.60 602.29 Q744.00 602.03 744.36 602.29 Q744.72 602.65 745.44 602.80 Q744.72 602.95 744.36 603.31 Q744.00 603.57 743.60 603.31 Q743.34 602.95 742.68 602.80 Z" fill="#eef5fc"/><rect x="743.07" y="601.93" width="0.8" height="1.74" fill="#eef5fc"/><rect x="743.52" y="602.03" width="0.8" height="1.54" fill="#eef5fc"/><rect x="744.47" y="601.97" width="0.8" height="1.66" fill="#eef5fc"/><path d="M747.40 602.80 Q749.60 602.31 750.48 601.10 Q751.80 600.25 753.30 601.10 Q754.80 602.31 757.80 602.80 Q754.80 603.29 753.30 604.50 Q751.80 605.35 750.48 604.50 Q749.60 603.29 747.40 602.80 Z" fill="#80abdc"/><rect x="749.08" y="600.82" width="0.8" height="3.96" fill="#80abdc"/><rect x="751.87" y="601.15" width="0.8" height="3.30" fill="#80abdc"/><rect x="755.28" y="600.66" width="0.8" height="4.27" fill="#80abdc"/><path d="M763.90 602.80 Q765.55 602.31 766.21 601.10 Q767.20 600.25 769.00 601.10 Q770.80 602.31 774.40 602.80 Q770.80 603.29 769.00 604.50 Q767.20 605.35 766.21 604.50 Q765.55 603.29 763.90 602.80 Z" fill="#80abdc"/><rect x="764.67" y="600.69" width="0.8" height="4.21" fill="#80abdc"/><rect x="767.97" y="600.13" width="0.8" height="5.33" fill="#80abdc"/><rect x="770.94" y="599.84" width="0.8" height="5.92" fill="#80abdc"/><path d="M776.62 602.80 Q778.16 602.54 778.78 601.89 Q779.70 601.44 780.54 601.89 Q781.38 602.54 783.06 602.80 Q781.38 603.06 780.54 603.71 Q779.70 604.16 778.78 603.71 Q778.16 603.06 776.62 602.80 Z" fill="#80abdc"/><rect x="777.60" y="601.50" width="0.8" height="2.59" fill="#80abdc"/><rect x="779.55" y="601.34" width="0.8" height="2.93" fill="#80abdc"/><rect x="781.86" y="601.53" width="0.8" height="2.53" fill="#80abdc"/><path d="M786.34 602.80 Q787.77 602.54 788.34 601.89 Q789.20 601.44 790.04 601.89 Q790.88 602.54 792.56 602.80 Q790.88 603.06 790.04 603.71 Q789.20 604.16 788.34 603.71 Q787.77 603.06 786.34 602.80 Z" fill="#80abdc"/><rect x="787.22" y="601.42" width="0.8" height="2.77" fill="#80abdc"/><rect x="789.49" y="601.65" width="0.8" height="2.30" fill="#80abdc"/><rect x="791.25" y="601.24" width="0.8" height="3.11" fill="#80abdc"/><path d="M797.75 602.80 Q799.67 602.23 800.44 600.82 Q801.60 599.82 803.85 600.82 Q806.10 602.23 810.60 602.80 Q806.10 603.37 803.85 604.78 Q801.60 605.78 800.44 604.78 Q799.67 603.37 797.75 602.80 Z" fill="#80abdc"/><rect x="799.07" y="600.55" width="0.8" height="4.50" fill="#80abdc"/><rect x="802.68" y="599.78" width="0.8" height="6.04" fill="#80abdc"/><rect x="806.98" y="599.40" width="0.8" height="6.80" fill="#80abdc"/><path d="M810.05 602.80 Q813.62 602.22 815.06 600.76 Q817.20 599.74 819.00 600.76 Q820.80 602.22 824.40 602.80 Q820.80 603.38 819.00 604.84 Q817.20 605.86 815.06 604.84 Q813.62 603.38 810.05 602.80 Z" fill="#80abdc"/><rect x="813.25" y="600.46" width="0.8" height="4.67" fill="#80abdc"/><rect x="816.96" y="600.44" width="0.8" height="4.73" fill="#80abdc"/><rect x="821.34" y="599.71" width="0.8" height="6.17" fill="#80abdc"/><path d="M831.60 602.80 Q833.25 602.61 833.91 602.12 Q834.90 601.78 835.80 602.12 Q836.70 602.61 838.50 602.80 Q836.70 602.99 835.80 603.48 Q834.90 603.82 833.91 603.48 Q833.25 602.99 831.60 602.80 Z" fill="#80abdc"/><rect x="833.06" y="601.67" width="0.8" height="2.27" fill="#80abdc"/><rect x="834.56" y="601.68" width="0.8" height="2.23" fill="#80abdc"/><rect x="836.71" y="601.92" width="0.8" height="1.75" fill="#80abdc"/><path d="M843.95 602.80 Q845.33 602.35 845.88 601.21 Q846.70 600.42 847.75 601.21 Q848.80 602.35 850.90 602.80 Q848.80 603.25 847.75 604.39 Q846.70 605.18 845.88 604.39 Q845.33 603.25 843.95 602.80 Z" fill="#80abdc"/><rect x="845.03" y="601.18" width="0.8" height="3.24" fill="#80abdc"/><rect x="846.49" y="600.24" width="0.8" height="5.13" fill="#80abdc"/><rect x="848.79" y="600.84" width="0.8" height="3.92" fill="#80abdc"/><path d="M852.45 602.80 Q853.83 602.35 854.38 601.21 Q855.20 600.42 856.40 601.21 Q857.60 602.35 860.00 602.80 Q857.60 603.25 856.40 604.39 Q855.20 605.18 854.38 604.39 Q853.83 603.25 852.45 602.80 Z" fill="#80abdc"/><rect x="853.38" y="600.44" width="0.8" height="4.73" fill="#80abdc"/><rect x="855.08" y="600.87" width="0.8" height="3.87" fill="#80abdc"/><rect x="857.79" y="600.68" width="0.8" height="4.25" fill="#80abdc"/><path d="M864.40 602.80 Q866.05 602.28 866.71 600.99 Q867.70 600.08 868.60 600.99 Q869.50 602.28 871.30 602.80 Q869.50 603.32 868.60 604.61 Q867.70 605.52 866.71 604.61 Q866.05 603.32 864.40 602.80 Z" fill="#80abdc"/><rect x="865.21" y="600.23" width="0.8" height="5.14" fill="#80abdc"/><rect x="868.06" y="600.51" width="0.8" height="4.58" fill="#80abdc"/><rect x="869.74" y="600.90" width="0.8" height="3.80" fill="#80abdc"/><path d="M875.90 602.80 Q877.55 602.67 878.21 602.35 Q879.20 602.12 880.10 602.35 Q881.00 602.67 882.80 602.80 Q881.00 602.93 880.10 603.25 Q879.20 603.48 878.21 603.25 Q877.55 602.93 875.90 602.80 Z" fill="#80abdc"/><rect x="876.77" y="602.13" width="0.8" height="1.34" fill="#80abdc"/><rect x="878.71" y="602.05" width="0.8" height="1.50" fill="#80abdc"/><rect x="881.61" y="602.33" width="0.8" height="0.93" fill="#80abdc"/><path d="M898.50 602.80 Q899.60 602.67 900.04 602.35 Q900.70 602.12 901.30 602.35 Q901.90 602.67 903.10 602.80 Q901.90 602.93 901.30 603.25 Q900.70 603.48 900.04 603.25 Q899.60 602.93 898.50 602.80 Z" fill="#80abdc"/><rect x="899.54" y="602.23" width="0.8" height="1.13" fill="#80abdc"/><rect x="900.77" y="602.10" width="0.8" height="1.41" fill="#80abdc"/><rect x="901.70" y="602.12" width="0.8" height="1.35" fill="#80abdc"/><path d="M910.55 602.80 Q911.38 602.67 911.71 602.35 Q912.20 602.12 912.65 602.35 Q913.10 602.67 914.00 602.80 Q913.10 602.93 912.65 603.25 Q912.20 603.48 911.71 603.25 Q911.38 602.93 910.55 602.80 Z" fill="#80abdc"/><rect x="911.05" y="602.08" width="0.8" height="1.44" fill="#80abdc"/><rect x="911.72" y="602.10" width="0.8" height="1.41" fill="#80abdc"/><rect x="913.46" y="602.13" width="0.8" height="1.35" fill="#80abdc"/><path d="M918.28 602.80 Q918.94 602.69 919.20 602.40 Q919.60 602.20 919.96 602.40 Q920.32 602.69 921.04 602.80 Q920.32 602.91 919.96 603.20 Q919.60 603.40 919.20 603.20 Q918.94 602.91 918.28 602.80 Z" fill="#80abdc"/><rect x="918.52" y="602.39" width="0.8" height="0.83" fill="#80abdc"/><rect x="919.31" y="602.31" width="0.8" height="0.98" fill="#80abdc"/><rect x="920.38" y="602.21" width="0.8" height="1.18" fill="#80abdc"/><path d="M931.55 602.80 Q933.48 602.41 934.25 601.44 Q935.40 600.76 936.60 601.44 Q937.80 602.41 940.20 602.80 Q937.80 603.19 936.60 604.16 Q935.40 604.84 934.25 604.16 Q933.48 603.19 931.55 602.80 Z" fill="#80abdc"/><rect x="932.97" y="601.31" width="0.8" height="2.99" fill="#80abdc"/><rect x="935.67" y="600.82" width="0.8" height="3.95" fill="#80abdc"/><rect x="937.83" y="600.54" width="0.8" height="4.51" fill="#80abdc"/><path d="M944.70 602.80 Q947.45 602.33 948.55 601.16 Q950.20 600.33 952.00 601.16 Q953.80 602.33 957.40 602.80 Q953.80 603.27 952.00 604.44 Q950.20 605.27 948.55 604.44 Q947.45 603.27 944.70 602.80 Z" fill="#80abdc"/><rect x="946.96" y="601.07" width="0.8" height="3.45" fill="#80abdc"/><rect x="951.08" y="601.05" width="0.8" height="3.50" fill="#80abdc"/><rect x="954.33" y="600.29" width="0.8" height="5.01" fill="#80abdc"/><path d="M964.45 602.80 Q965.83 602.64 966.38 602.23 Q967.20 601.95 967.95 602.23 Q968.70 602.64 970.20 602.80 Q968.70 602.96 967.95 603.37 Q967.20 603.65 966.38 603.37 Q965.83 602.96 964.45 602.80 Z" fill="#80abdc"/><rect x="965.40" y="602.01" width="0.8" height="1.58" fill="#80abdc"/><rect x="967.20" y="602.05" width="0.8" height="1.49" fill="#80abdc"/><rect x="968.61" y="602.18" width="0.8" height="1.24" fill="#80abdc"/><path d="M978.90 602.80 Q980.55 602.57 981.21 602.01 Q982.20 601.61 983.10 602.01 Q984.00 602.57 985.80 602.80 Q984.00 603.03 983.10 603.59 Q982.20 603.99 981.21 603.59 Q980.55 603.03 978.90 602.80 Z" fill="#80abdc"/><rect x="979.57" y="601.59" width="0.8" height="2.41" fill="#80abdc"/><rect x="982.35" y="601.70" width="0.8" height="2.20" fill="#80abdc"/><rect x="984.44" y="601.82" width="0.8" height="1.96" fill="#80abdc"/><path d="M986.90 602.80 Q988.55 602.59 989.21 602.06 Q990.20 601.69 991.10 602.06 Q992.00 602.59 993.80 602.80 Q992.00 603.01 991.10 603.54 Q990.20 603.91 989.21 603.54 Q988.55 603.01 986.90 602.80 Z" fill="#80abdc"/><rect x="987.77" y="601.87" width="0.8" height="1.85" fill="#80abdc"/><rect x="990.47" y="602.07" width="0.8" height="1.45" fill="#80abdc"/><rect x="992.20" y="601.95" width="0.8" height="1.69" fill="#80abdc"/><path d="M999.25 602.80 Q1000.62 602.35 1001.17 601.21 Q1002.00 600.42 1003.05 601.21 Q1004.10 602.35 1006.20 602.80 Q1004.10 603.25 1003.05 604.39 Q1002.00 605.18 1001.17 604.39 Q1000.62 603.25 999.25 602.80 Z" fill="#80abdc"/><rect x="1000.37" y="600.84" width="0.8" height="3.92" fill="#80abdc"/><rect x="1002.03" y="600.78" width="0.8" height="4.04" fill="#80abdc"/><rect x="1004.34" y="600.32" width="0.8" height="4.97" fill="#80abdc"/></svg><div style="left:603px;top:222px;width:2px;height:395.5px;background:#8d8d90"></div><svg style="position:absolute;left:597.5px;top:207.5px;" width="13" height="18.5" viewBox="0 0 13 18.5"><path d="M1.5 3.2 Q1.5 1 3.7 1 H9.3 Q11.5 1 11.5 3.2 V11.5 L6.5 16.8 L1.5 11.5 Z" fill="#7b7b7e" stroke="#d6d6d8" stroke-width="1.1" stroke-linejoin="round"/></svg><div style="left:473.6px;top:290.53px;width:4.4px;height:326.6500000000001px;background:#131315;border-radius:0px;"></div><div style="left:474.1px;top:480px;width:1.9px;height:15px;background:#58585a;border-radius:1px;"></div>
</body></html>
